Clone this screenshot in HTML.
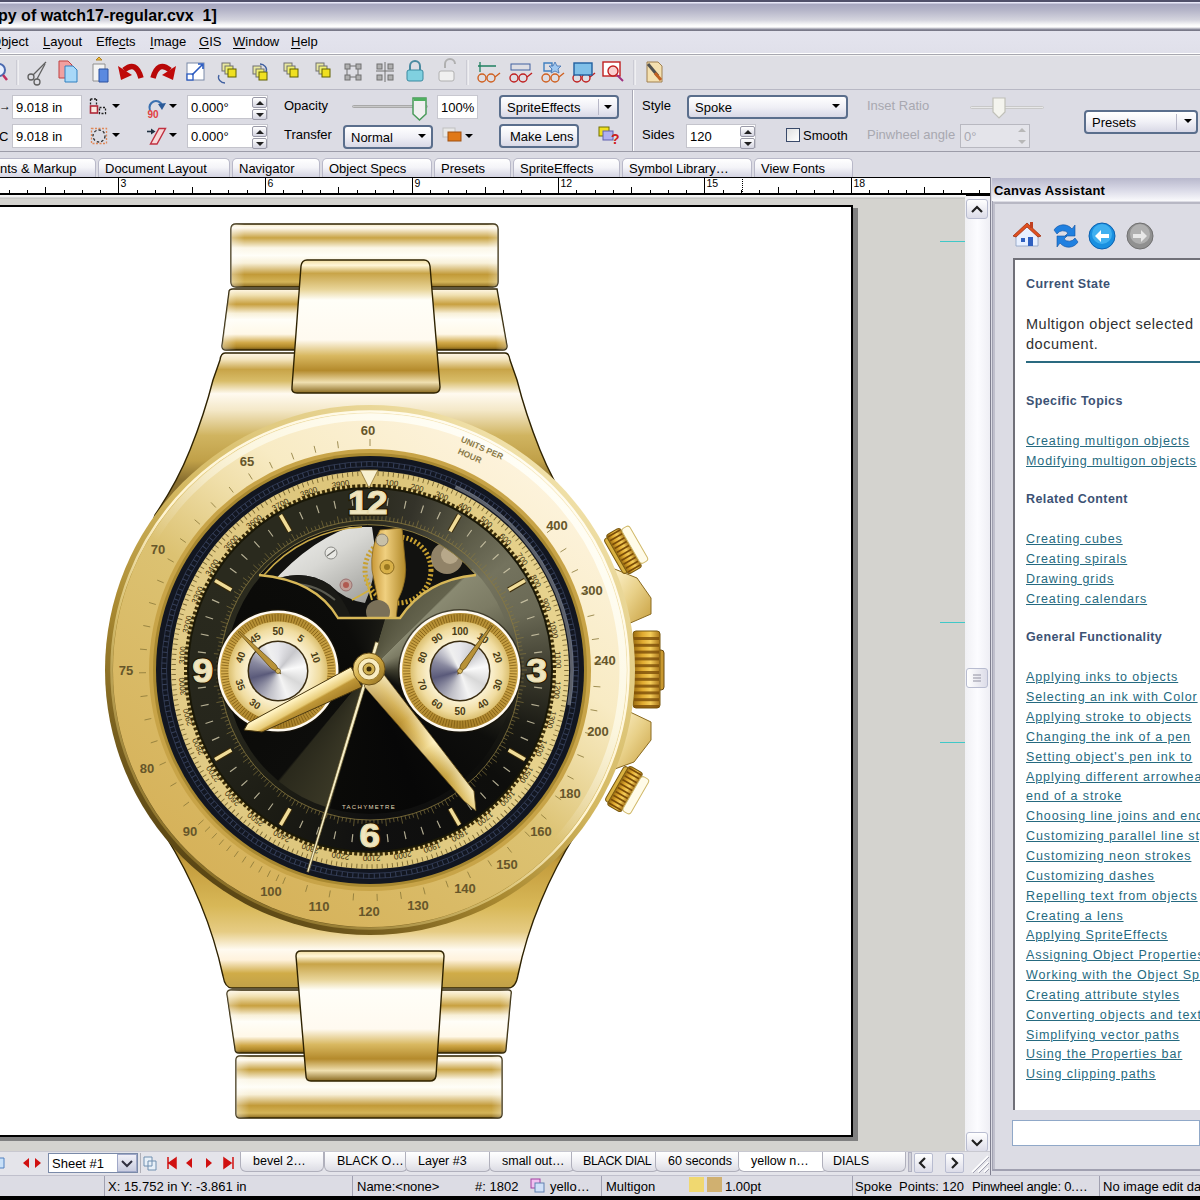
<!DOCTYPE html>
<html><head><meta charset="utf-8">
<style>
*{margin:0;padding:0;box-sizing:border-box}
html,body{width:1200px;height:1200px;overflow:hidden;background:#dcdce4;font-family:"Liberation Sans",sans-serif;font-size:12px;color:#000}
.a{position:absolute}
.t{position:absolute;white-space:nowrap;line-height:1}
#title{left:0;top:0;width:1200px;height:31px;background:linear-gradient(#50506a 0,#50506a 1.5px,#e8e8f8 2.5px,#a8a8c0 4.5px,#b4b4c8 10px,#d4d4de 20px,#fafafa 25px,#ffffff 27px,#8a8a9a 29.5px,#70707e 31px)}
#menu{left:0;top:31px;width:1200px;height:23px;background:linear-gradient(#e4e4ee,#e0e0ea);border-bottom:1px solid #fff}
#tool{left:0;top:54px;width:1200px;height:36px;background:#dedee4;border-top:1px solid #a8a8b0;box-shadow:inset 0 1px #f4f4f4;border-bottom:1px solid #b8b8c4}
#prop{left:0;top:90px;width:1200px;height:62px;background:#dcdce4;border-bottom:1px solid #9c9ca8}
#tabs{left:0;top:152px;width:990px;height:26px;background:#dcdce4}
.tab{position:absolute;top:6px;height:20px;border:1px solid #b8b8c8;border-bottom:none;border-radius:5px 5px 0 0;background:linear-gradient(#ffffff,#f4f4f8 45%,#d0d0e0);font-size:13px;padding:2px 0 0 6px;color:#000}
#ruler{left:0;top:177px;width:990px;height:19px;background:#fff;border-top:1px solid #000;border-bottom:2px solid #000}
#canvas{left:0;top:196px;width:966px;height:955px;background:#d4d3cf}
.u{text-decoration:underline}
.mi{font-size:13px;top:35px}
.mi u{text-decoration:underline;text-underline-offset:1.5px}
.inp{position:absolute;background:#fff;border:1px solid #c4c4cc;font-size:13px;padding:4px 0 0 3px;height:24px}
.dd{position:absolute;border:2px solid #5a6e8c;border-radius:4px;background:linear-gradient(#ffffff,#f0f0f6 50%,#d8d8e6);font-size:13px;padding:3px 0 0 6px;height:24px}
.arr{position:absolute;width:0;height:0;border-left:4px solid transparent;border-right:4px solid transparent;border-top:4px solid #000}
.spin{position:absolute;width:15px;height:24px}
.spin div{position:absolute;left:0;width:15px;height:11px;border:1px solid #9a9aa8;border-radius:2px;background:linear-gradient(#fff,#d4d4e0)}
.lbl{position:absolute;font-size:13px;white-space:nowrap;line-height:1}
.gray{color:#a8a8b0}
.lk{position:absolute;left:1026px;font-family:"Liberation Sans",sans-serif;font-size:12.5px;letter-spacing:0.9px;color:#266a80;text-decoration:underline;white-space:nowrap;line-height:1}
.hd{position:absolute;left:1026px;font-weight:bold;font-size:12.5px;letter-spacing:0.4px;color:#3c5274;white-space:nowrap;line-height:1}
.btab{position:absolute;top:1152px;height:20px;font-size:12.5px;white-space:nowrap;padding:2px 0 0 12px;background:linear-gradient(#ffffff,#f0f0f4 50%,#dcdce4);border:1px solid #b0b0bc;border-top:none;border-radius:0 0 6px 6px;line-height:1.2}
.st{position:absolute;top:1176px;height:20px;font-size:13px;white-space:nowrap;padding:3px 0 0 4px;border-left:1px solid #fff;line-height:1}
</style></head><body>
<div id="title" class="a"></div>
<div class="t" style="left:-2px;top:8px;font-size:16px;font-weight:bold;letter-spacing:0px">py of watch17-regular.cvx&nbsp; 1]</div>
<div id="menu" class="a"></div>
<div class="t mi" style="left:-9px"><u>O</u>bject</div>
<div class="t mi" style="left:43px"><u>L</u>ayout</div>
<div class="t mi" style="left:96px">Effe<u>c</u>ts</div>
<div class="t mi" style="left:150px"><u>I</u>mage</div>
<div class="t mi" style="left:199px"><u>G</u>IS</div>
<div class="t mi" style="left:233px"><u>W</u>indow</div>
<div class="t mi" style="left:291px"><u>H</u>elp</div>
<div id="tool" class="a"></div>
<svg class="a" style="left:0;top:55px" width="700" height="34" viewBox="0 55 700 34">
 <!-- magnifier partial -->
 <circle cx="-1" cy="70" r="6" fill="#e8f0ff" stroke="#4a6ab0" stroke-width="2"/>
 <line x1="3" y1="75" x2="7" y2="80" stroke="#c03060" stroke-width="2.5"/>
 <line x1="17" y1="60" x2="17" y2="85" stroke="#b8b8c4"/>
 <line x1="18" y1="60" x2="18" y2="85" stroke="#fff"/>
 <!-- scissors -->
 <g stroke="#606060" stroke-width="1.3" fill="none"><circle cx="31" cy="77" r="3"/><circle cx="37" cy="82" r="3"/><line x1="33" y1="75" x2="46" y2="62"/><line x1="37" y1="79" x2="45" y2="64"/></g>
 <!-- copy -->
 <path d="M59 61h9l4 4v13h-13z" fill="#f0a0a0" stroke="#c04040"/><path d="M65 66h8l4 4v12h-12z" fill="#a8d8f8" stroke="#3080c0"/>
 <!-- paste -->
 <path d="M93 64h12v17h-12z" fill="#f4f4f4" stroke="#909090"/><path d="M96 60l3-3 3 3z" fill="#f0c040" stroke="#b08020"/><path d="M99 69h9v13h-9z" fill="#5a8ae0" stroke="#2a50a0"/>
 <!-- undo / redo -->
 <path d="M141 78 Q136 60 124 70" stroke="#b80808" stroke-width="5.5" fill="none"/><path d="M118 66 L121 80 L132 75 Z" fill="#c00a0a"/>
 <path d="M153 78 Q158 60 170 70" stroke="#b80808" stroke-width="5.5" fill="none"/><path d="M176 66 L173 80 L162 75 Z" fill="#c00a0a"/>
 <!-- resize -->
 <rect x="187" y="63" width="17" height="17" fill="#fff" stroke="#7a8aa8"/><rect x="187" y="74" width="6" height="6" fill="#fff" stroke="#2a5ac0" stroke-width="1.3"/><path d="M192 75l10-10M198 64h5v5" stroke="#2a5ac0" stroke-width="1.6" fill="none"/>
 <!-- group icons -->
 <g id="grp"><rect x="222" y="63" width="8" height="8" fill="#e8e8a0" stroke="#707070"/><rect x="225" y="66" width="8" height="8" fill="#f0f070" stroke="#707070"/><rect x="228" y="69" width="8" height="8" fill="#f0e020" stroke="#606000"/></g>
 <path d="M219 75c-2 4 2 8 6 8" stroke="#4060a0" fill="none" stroke-width="1.3"/>
 <g transform="translate(31,3)"><use href="#grp"/></g><path d="M260 64c4 0 8 4 6 8" stroke="#4060a0" fill="none" stroke-width="1.3"/>
 <g transform="translate(62,0)"><use href="#grp"/></g>
 <g transform="translate(94,0)"><use href="#grp"/></g>
 <!-- align -->
 <g stroke="#707070" fill="#b0b0b0"><rect x="345" y="64" width="5" height="5"/><rect x="356" y="64" width="5" height="5"/><rect x="345" y="75" width="5" height="5"/><rect x="356" y="75" width="5" height="5"/><path d="M350 66h6M350 77h6M347 69v6M358 69v6" fill="none"/></g>
 <g stroke="#707070" fill="#b0b0b0"><rect x="377" y="64" width="5" height="5"/><rect x="388" y="64" width="5" height="5"/><rect x="377" y="75" width="5" height="5"/><rect x="388" y="75" width="5" height="5"/><path d="M376 71h18M385 62v20" fill="none"/></g>
 <!-- locks -->
 <path d="M410 70v-4a5 5 0 0 1 10 0v4" stroke="#4a8aa0" stroke-width="2" fill="none"/><rect x="407" y="70" width="16" height="11" rx="2" fill="#80d0e0" stroke="#3a8aa0"/>
 <path d="M445 68v-4a5 5 0 0 1 10 0" stroke="#b0b0b0" stroke-width="2" fill="none"/><rect x="439" y="71" width="15" height="10" rx="2" fill="#f0f0f0" stroke="#b0b0b0"/>
 <line x1="467" y1="60" x2="467" y2="85" stroke="#b8b8c4"/><line x1="468" y1="60" x2="468" y2="85" stroke="#fff"/>
 <!-- glasses -->
 <g fill="none" stroke-width="1.4">
  <g stroke="#d06020"><circle cx="482" cy="78" r="4"/><circle cx="491" cy="78" r="4"/><path d="M495 77l5-4"/></g><path d="M480 62v10M478 66h18" stroke="#208060" stroke-width="1.3"/>
  <g stroke="#c02020"><circle cx="514" cy="78" r="4"/><circle cx="523" cy="78" r="4"/><path d="M527 77l5-4"/></g><rect x="511" y="64" width="19" height="6" stroke="#4060a0" stroke-width="1"/>
  <g stroke="#d06020"><circle cx="546" cy="78" r="4"/><circle cx="555" cy="78" r="4"/><path d="M559 77l5-4"/></g><path d="M544 63h8v8h-8z" stroke="#4080c0"/><path d="M555 62l2 4 4 0-3 3 1 4-4-2-4 2 1-4-3-3 4 0z" fill="#a0c8f0" stroke="#4070b0" stroke-width=".8"/>
  <g stroke="#c02020"><circle cx="577" cy="78" r="4"/><circle cx="586" cy="78" r="4"/><path d="M590 77l5-4"/></g><rect x="574" y="63" width="18" height="12" fill="#80c0e8" stroke="#2060a0"/>
  <rect x="603" y="62" width="17" height="14" stroke="#c02020" fill="#fff"/><circle cx="613" cy="71" r="5" stroke="#c02020" fill="#f8d0d0"/><path d="M617 75l6 6" stroke="#a03080" stroke-width="2"/>
 </g>
 <line x1="634" y1="60" x2="634" y2="85" stroke="#b8b8c4"/><line x1="635" y1="60" x2="635" y2="85" stroke="#fff"/>
 <path d="M647 62h11l4 4v16h-15z" fill="#f4e0b0" stroke="#a08050"/><path d="M648 64l10 12" stroke="#505050" stroke-width="3"/><path d="M655 73l6 7" stroke="#c06020" stroke-width="3"/>
</svg>
<div id="prop" class="a"></div>
<!-- row1 -->
<div class="t" style="left:-1px;top:100px;font-size:12px">&#8594;</div>
<div class="t" style="left:-1px;top:130px;font-size:13px">C</div>
<div class="inp" style="left:12px;top:95px;width:70px">9.018 in</div>
<div class="inp" style="left:12px;top:124px;width:70px">9.018 in</div>
<svg class="a" style="left:85px;top:95px" width="100" height="55">
 <path d="M5.5 4V11M11.5 4V11M5.5 4H11.5" stroke="#202020" stroke-width="1.3" stroke-dasharray="2 1.5" fill="none"/>
 <rect x="5.5" y="11" width="7" height="7" fill="#f8e8e0" stroke="#b02838" stroke-width="1.6"/>
 <rect x="14.5" y="12.5" width="6" height="6" fill="none" stroke="#202020" stroke-width="1.3" stroke-dasharray="2 1.5"/>
 <rect x="6.5" y="33.5" width="15" height="15" fill="none" stroke="#e08858" stroke-width="1.3" stroke-dasharray="2 1.5"/>
 <circle cx="14" cy="41" r="6" fill="none" stroke="#303030" stroke-width="1.3" stroke-dasharray="2.5 2"/>
 <path d="M65 15A6.5 6.5 0 1 1 77 10" stroke="#3a70b0" stroke-width="2.2" fill="none"/><path d="M73 9L81 8L77 15Z" fill="#2a5a98"/>
 <text x="62.5" y="22.5" font-size="10" font-weight="bold" fill="#e04040" font-family="Liberation Sans">90</text>
 <path d="M62 36.5H67" stroke="#203040" stroke-width="1.6"/><path d="M66 33.5L70.5 36.5L66 39.5Z" fill="#203040"/>
 <path d="M74 33.5L80.5 33.5L72 49L65.5 49Z" fill="#f8d8d8" stroke="#c03040" stroke-width="1.4"/>
</svg>
<div class="arr" style="left:112px;top:104px"></div><div class="arr" style="left:112px;top:133px"></div>
<div class="arr" style="left:169px;top:104px"></div><div class="arr" style="left:169px;top:133px"></div>
<div class="inp" style="left:187px;top:95px;width:81px">0.000°</div>
<div class="inp" style="left:187px;top:124px;width:81px">0.000°</div>
<div class="spin" style="left:252px;top:97px"><div style="top:0"></div><div style="top:12px"></div></div>
<div class="spin" style="left:252px;top:126px"><div style="top:0"></div><div style="top:12px"></div></div>
<svg class="a" style="left:252px;top:97px" width="16" height="55" fill="#202020"><path d="M4 8l4-4 4 4z M4 16l4 4 4-4z M4 37l4-4 4 4z M4 45l4 4 4-4z"/></svg>
<div class="lbl" style="left:284px;top:99px">Opacity</div>
<div class="lbl" style="left:284px;top:128px">Transfer</div>
<div class="a" style="left:352px;top:105px;width:76px;height:3px;background:#c8c8c8;border:1px solid #a8a8a8;border-radius:2px"></div>
<svg class="a" style="left:411px;top:95px" width="18" height="26"><path d="M2 3h13v16l-6.5 6-6.5-6z" fill="#f0f0f0" stroke="#4a9a5a" stroke-width="1.5"/><rect x="3" y="3" width="12" height="3" fill="#50b060"/></svg>
<div class="inp" style="left:437px;top:95px;width:41px;border-color:#c8c8d0">100%</div>
<div class="dd" style="left:499px;top:95px;width:120px">SpriteEffects</div><div class="a" style="left:598px;top:99px;width:1px;height:16px;background:#b8b8c8"></div><div class="arr" style="left:604px;top:105px"></div>
<div class="dd" style="left:343px;top:125px;width:90px">Normal</div><div class="arr" style="left:418px;top:134px"></div>
<svg class="a" style="left:441px;top:125px" width="40" height="20"><rect x="2" y="3" width="12" height="9" fill="#e8e8e8" stroke="#c0c0c0"/><rect x="7" y="7" width="13" height="9" fill="#e07818" stroke="#a05010"/></svg>
<div class="arr" style="left:465px;top:134px"></div>
<div class="dd" style="left:499px;top:124px;width:80px;padding-left:9px">Make Lens</div>
<svg class="a" style="left:597px;top:124px" width="26" height="24"><rect x="2" y="3" width="10" height="9" fill="#f0e020" stroke="#707000"/><rect x="6" y="7" width="10" height="9" fill="#b0b0f0" stroke="#6060b0"/><text x="14" y="20" font-size="14" font-weight="bold" fill="#d02020" font-family="Liberation Sans">?</text></svg>
<div class="a" style="left:632px;top:90px;width:1px;height:61px;background:#a8a8b4"></div><div class="a" style="left:633px;top:90px;width:1px;height:61px;background:#fff"></div>
<div class="lbl" style="left:642px;top:99px">Style</div>
<div class="lbl" style="left:642px;top:128px">Sides</div>
<div class="dd" style="left:687px;top:95px;width:161px">Spoke</div><div class="arr" style="left:832px;top:104px"></div>
<div class="inp" style="left:686px;top:124px;width:70px">120</div>
<div class="spin" style="left:740px;top:126px"><div style="top:0"></div><div style="top:12px"></div></div>
<svg class="a" style="left:740px;top:126px" width="16" height="26" fill="#202020"><path d="M4 8l4-4 4 4z M4 16l4 4 4-4z"/></svg>
<div class="a" style="left:786px;top:128px;width:14px;height:14px;border:1px solid #3a4a6a;background:linear-gradient(135deg,#e0e0e0,#fff)"></div>
<div class="lbl" style="left:803px;top:129px">Smooth</div>
<div class="lbl gray" style="left:867px;top:99px">Inset Ratio</div>
<div class="lbl gray" style="left:867px;top:128px">Pinwheel angle</div>
<div class="a" style="left:970px;top:106px;width:74px;height:3px;background:#e8e8e8;border:1px solid #c8c8c8;border-radius:2px"></div>
<svg class="a" style="left:990px;top:95px" width="18" height="26"><path d="M3 3h12v14l-6 6-6-6z" fill="#f4f4ee" stroke="#c0c0b8" stroke-width="1.2"/></svg>
<div class="inp gray" style="left:960px;top:124px;width:70px;border-color:#b8b8c0;background:#e4e4ea">0°</div>
<svg class="a" style="left:1014px;top:124px" width="16" height="26" fill="#b8b8b8"><path d="M4 8l4-4 4 4z M4 16l4 4 4-4z"/></svg>
<div class="dd" style="left:1084px;top:110px;width:114px">Presets</div><div class="a" style="left:1176px;top:114px;width:1px;height:16px;background:#b8b8c8"></div><div class="arr" style="left:1184px;top:119px"></div>
<div id="tabs" class="a"></div>
<div class="tab" style="left:-20px;width:116px;top:158px;padding-left:19px">nts &amp; Markup</div>
<div class="tab" style="left:98px;width:132px;top:158px">Document Layout</div>
<div class="tab" style="left:232px;width:88px;top:158px">Navigator</div>
<div class="tab" style="left:322px;width:110px;top:158px">Object Specs</div>
<div class="tab" style="left:434px;width:77px;top:158px">Presets</div>
<div class="tab" style="left:513px;width:107px;top:158px">SpriteEffects</div>
<div class="tab" style="left:622px;width:130px;top:158px">Symbol Library…</div>
<div class="tab" style="left:754px;width:99px;top:158px">View Fonts</div>
<div id="ruler" class="a"></div>
<svg class="a" style="left:0;top:178px" width="990" height="16"><path d="M9.5 12V16M27.5 12V16M45.5 9V16M64.5 12V16M82.5 12V16M100.5 12V16M118.5 0V16M137.5 12V16M155.5 12V16M173.5 12V16M192.5 9V16M210.5 12V16M228.5 12V16M247.5 12V16M265.5 0V16M283.5 12V16M302.5 12V16M320.5 12V16M338.5 9V16M357.5 12V16M375.5 12V16M393.5 12V16M412.5 0V16M430.5 12V16M448.5 12V16M466.5 12V16M485.5 9V16M503.5 12V16M521.5 12V16M540.5 12V16M558.5 0V16M576.5 12V16M595.5 12V16M613.5 12V16M631.5 9V16M650.5 12V16M668.5 12V16M686.5 12V16M704.5 0V16M723.5 12V16M741.5 12V16M759.5 12V16M778.5 9V16M796.5 12V16M814.5 12V16M833.5 12V16M851.5 0V16M869.5 12V16M888.5 12V16M906.5 12V16M924.5 9V16M943.5 12V16M961.5 12V16M979.5 12V16" stroke="#000" stroke-width="1"/><text x="120.5" y="9" font-family="Liberation Sans" font-size="10.5" fill="#000">3</text><text x="267.5" y="9" font-family="Liberation Sans" font-size="10.5" fill="#000">6</text><text x="414.5" y="9" font-family="Liberation Sans" font-size="10.5" fill="#000">9</text><text x="560.5" y="9" font-family="Liberation Sans" font-size="10.5" fill="#000">12</text><text x="706.5" y="9" font-family="Liberation Sans" font-size="10.5" fill="#000">15</text><text x="853.5" y="9" font-family="Liberation Sans" font-size="10.5" fill="#000">18</text><path d="M0 15.5H990" stroke="#000"/><path d="M742.5 1V15" stroke="#000" stroke-dasharray="1 1"/></svg>
<div id="canvas" class="a"></div>
<div class="a" style="left:0;top:195px;width:966px;height:4px;background:linear-gradient(#f6f6f6 0,#f0f0f0 2px,#b8b8b8 3px,#d4d3cf 4px)"></div>
<div class="a" style="left:853px;top:208px;width:5px;height:933px;background:#808080"></div>
<div class="a" style="left:0;top:1136px;width:858px;height:5px;background:#808080"></div>
<div class="a" style="left:0;top:205px;width:853px;height:932px;background:#fff;border:2px solid #000;border-left:none"></div>
<div class="a" style="left:940px;top:241px;width:25px;height:1px;background:#40c8c8"></div>
<div class="a" style="left:940px;top:622px;width:25px;height:1px;background:#40c8c8"></div>
<div class="a" style="left:940px;top:742px;width:25px;height:1px;background:#40c8c8"></div>
<!-- vertical scrollbar -->
<div class="a" style="left:965px;top:196px;width:25px;height:955px;background:linear-gradient(90deg,#f0f0f4,#fcfcff 50%,#eeeef4)"></div>
<div class="a" style="left:966px;top:199px;width:22px;height:20px;border:1px solid #b8bcd0;border-radius:3px;background:linear-gradient(#fff,#dcdce8)"></div>
<svg class="a" style="left:966px;top:199px" width="22" height="20"><path d="M6 13l5-5 5 5" stroke="#202020" stroke-width="2.2" fill="none"/></svg>
<div class="a" style="left:966px;top:1132px;width:22px;height:20px;border:1px solid #b8bcd0;border-radius:3px;background:linear-gradient(#fff,#dcdce8)"></div>
<svg class="a" style="left:966px;top:1132px" width="22" height="20"><path d="M6 8l5 5 5-5" stroke="#202020" stroke-width="2.2" fill="none"/></svg>
<div class="a" style="left:966px;top:668px;width:22px;height:20px;border:1px solid #b8bcd0;border-radius:3px;background:linear-gradient(90deg,#fff,#dcdce8)"></div>
<svg class="a" style="left:966px;top:668px" width="22" height="20"><path d="M7 7h8M7 10h8M7 13h8" stroke="#9090a0" stroke-width="1"/></svg>
<div class="a" style="left:0;top:0;width:1200px;height:1200px;overflow:hidden;clip-path:inset(207px 348px 64px 0)"><svg width="1200" height="1200" viewBox="0 0 1200 1200" style="position:absolute;left:0;top:0">
<defs>
<linearGradient id="gLink" x1="0" y1="0" x2="0" y2="1">
 <stop offset="0" stop-color="#f8ecc8"/><stop offset=".06" stop-color="#fffaf0"/><stop offset=".22" stop-color="#c9a445"/>
 <stop offset=".38" stop-color="#fbf6e6"/><stop offset=".5" stop-color="#fffef8"/><stop offset=".62" stop-color="#f8f0d8"/>
 <stop offset=".8" stop-color="#c29a38"/><stop offset=".92" stop-color="#d4b458"/><stop offset="1" stop-color="#8a6a20"/>
</linearGradient>
<linearGradient id="gCLink" x1="0" y1="0" x2="0" y2="1">
 <stop offset="0" stop-color="#f0dca0"/><stop offset=".04" stop-color="#fff6d8"/><stop offset=".1" stop-color="#c8a448"/>
 <stop offset=".22" stop-color="#e8d498"/><stop offset=".3" stop-color="#fffef8"/><stop offset=".6" stop-color="#fffaf0"/>
 <stop offset=".72" stop-color="#d8b860"/><stop offset=".83" stop-color="#b48a2c"/><stop offset=".92" stop-color="#f0e0b0"/><stop offset="1" stop-color="#8a6a20"/>
</linearGradient>
<linearGradient id="gLugT" x1="0" y1="353" x2="0" y2="480" gradientUnits="userSpaceOnUse">
 <stop offset="0" stop-color="#fff8e8"/><stop offset=".05" stop-color="#f4e6c0"/><stop offset=".13" stop-color="#c8a448"/><stop offset=".22" stop-color="#d8bc68"/>
 <stop offset=".32" stop-color="#fffaf0"/><stop offset=".45" stop-color="#f4e8c8"/><stop offset=".65" stop-color="#d0b460"/><stop offset=".85" stop-color="#c0a048"/><stop offset="1" stop-color="#8a7030"/>
</linearGradient>
<linearGradient id="gLink2" x1="0" y1="0" x2="0" y2="1">
 <stop offset="0" stop-color="#fff8e8"/><stop offset=".1" stop-color="#f0e0b0"/><stop offset=".25" stop-color="#c8a040"/><stop offset=".4" stop-color="#f8f0d8"/>
 <stop offset=".5" stop-color="#fffef8"/><stop offset=".74" stop-color="#fff8e8"/><stop offset=".88" stop-color="#d0a848"/><stop offset=".95" stop-color="#b08828"/><stop offset="1" stop-color="#6a5018"/>
</linearGradient>
<linearGradient id="gEnds" x1="0" y1="0" x2="1" y2="0">
 <stop offset="0" stop-color="#fff" stop-opacity=".4"/><stop offset=".05" stop-color="#fff" stop-opacity="0"/><stop offset=".96" stop-color="#fff" stop-opacity="0"/><stop offset="1" stop-color="#fff" stop-opacity=".3"/>
</linearGradient>
<linearGradient id="gLugB" x1="0" y1="840" x2="0" y2="988" gradientUnits="userSpaceOnUse">
 <stop offset="0" stop-color="#7a6020"/><stop offset=".15" stop-color="#c49c3c"/><stop offset=".45" stop-color="#d8b858"/>
 <stop offset=".62" stop-color="#e6cc84"/><stop offset=".74" stop-color="#fffaf0"/><stop offset=".81" stop-color="#fff2dc"/><stop offset=".9" stop-color="#d0ac48"/><stop offset="1" stop-color="#c0a048"/>
</linearGradient>
<linearGradient id="gRim" x1="0.2" y1="0.9" x2="0.8" y2="0.1">
 <stop offset="0" stop-color="#5a4614"/><stop offset=".3" stop-color="#a88830"/><stop offset=".55" stop-color="#d4b860"/><stop offset="1" stop-color="#f0e0a8"/>
</linearGradient>
<linearGradient id="gBezel" x1="0.2" y1="0.9" x2="0.8" y2="0.1">
 <stop offset="0" stop-color="#d6b25a"/><stop offset=".45" stop-color="#dcc272"/><stop offset=".62" stop-color="#f0dfaa"/>
 <stop offset=".72" stop-color="#f8ebc4"/><stop offset="1" stop-color="#fdf3dc"/>
</linearGradient>
<linearGradient id="gTach" x1="0" y1="0" x2="1" y2="0">
 <stop offset="0" stop-color="#e2cc88"/><stop offset=".5" stop-color="#dcc478"/><stop offset="1" stop-color="#e8d490"/>
</linearGradient>
<linearGradient id="gSub" x1="0" y1="0" x2="0" y2="1">
 <stop offset="0" stop-color="#c8a448"/><stop offset=".3" stop-color="#f0e0a8"/><stop offset=".55" stop-color="#f8ecc0"/><stop offset=".8" stop-color="#d8b860"/><stop offset="1" stop-color="#b89438"/>
</linearGradient>
<radialGradient id="gSubR" cx=".5" cy=".5" r=".5">
 <stop offset=".55" stop-color="#fff8e0" stop-opacity=".5"/><stop offset=".8" stop-color="#e8cc78" stop-opacity="0"/><stop offset="1" stop-color="#a08030" stop-opacity=".5"/>
</radialGradient>
<linearGradient id="gSilver" x1="0.15" y1="0.85" x2="0.85" y2="0.15">
 <stop offset="0" stop-color="#6e7090"/><stop offset=".35" stop-color="#b8b8c4"/><stop offset=".5" stop-color="#f4f4f4"/><stop offset=".7" stop-color="#c8c8c8"/><stop offset="1" stop-color="#f8f8f8"/>
</linearGradient>
<linearGradient id="gHand" x1="0" y1="0" x2="0" y2="1">
 <stop offset="0" stop-color="#fff4c8"/><stop offset=".45" stop-color="#e8cc70"/><stop offset=".5" stop-color="#b89030"/><stop offset="1" stop-color="#d8b858"/>
</linearGradient>
<linearGradient id="gCrown" x1="0" y1="0" x2="1" y2="0">
 <stop offset="0" stop-color="#9a6c10"/><stop offset=".35" stop-color="#e0aa30"/><stop offset=".65" stop-color="#f4cc58"/><stop offset="1" stop-color="#a87418"/>
</linearGradient>
<linearGradient id="gGuard" x1="0" y1="0" x2="1" y2="1">
 <stop offset="0" stop-color="#fff4d0"/><stop offset=".5" stop-color="#e8d088"/><stop offset="1" stop-color="#c8a040"/>
</linearGradient>
<linearGradient id="gPiv" x1="0" y1="0" x2="1" y2="1">
 <stop offset="0" stop-color="#fff0b0"/><stop offset=".5" stop-color="#d0a840"/><stop offset="1" stop-color="#8a6a20"/>
</linearGradient>
<clipPath id="cWin"><path d="M259 575 A142 142 0 0 1 476 575 Q425 580 400 618 L338 618 Q316 580 259 575 Z"/></clipPath>
</defs>
<path d="M612 568 L637 578 L651 598 L651 614 L628 624 L612 618 Z" fill="url(#gGuard)" stroke="#8a6a20" stroke-width="1"/>
<path d="M612 716 L630 712 L651 722 L651 740 L634 762 L612 770 Z" fill="url(#gGuard)" stroke="#8a6a20" stroke-width="1"/>
<rect x="-12" y="-20" width="8" height="40" rx="3" fill="#d8b040" stroke="#7a5a10" transform="translate(624 551) rotate(-30)"/>
<g transform="translate(624 551) rotate(-30)"><rect x="-8" y="-22.5" width="16" height="45" rx="3" fill="url(#gCrown)" stroke="#7a5a10" stroke-width="1"/><line x1="-7" y1="-20.2" x2="7" y2="-20.2" stroke="#7a4c08" stroke-width="1.7"/><line x1="-7" y1="-15.8" x2="7" y2="-15.8" stroke="#7a4c08" stroke-width="1.7"/><line x1="-7" y1="-11.2" x2="7" y2="-11.2" stroke="#7a4c08" stroke-width="1.7"/><line x1="-7" y1="-6.8" x2="7" y2="-6.8" stroke="#7a4c08" stroke-width="1.7"/><line x1="-7" y1="-2.2" x2="7" y2="-2.2" stroke="#7a4c08" stroke-width="1.7"/><line x1="-7" y1="2.2" x2="7" y2="2.2" stroke="#7a4c08" stroke-width="1.7"/><line x1="-7" y1="6.8" x2="7" y2="6.8" stroke="#7a4c08" stroke-width="1.7"/><line x1="-7" y1="11.2" x2="7" y2="11.2" stroke="#7a4c08" stroke-width="1.7"/><line x1="-7" y1="15.8" x2="7" y2="15.8" stroke="#7a4c08" stroke-width="1.7"/><line x1="-7" y1="20.2" x2="7" y2="20.2" stroke="#7a4c08" stroke-width="1.7"/></g>
<rect x="8" y="-20" width="9" height="40" rx="3" fill="#fffbe8" stroke="#d0b868" transform="translate(624 551) rotate(-30)"/>
<rect x="-12" y="-20" width="8" height="40" rx="3" fill="#d8b040" stroke="#7a5a10" transform="translate(625 789) rotate(30)"/>
<g transform="translate(625 789) rotate(30)"><rect x="-8" y="-22.5" width="16" height="45" rx="3" fill="url(#gCrown)" stroke="#7a5a10" stroke-width="1"/><line x1="-7" y1="-20.2" x2="7" y2="-20.2" stroke="#7a4c08" stroke-width="1.7"/><line x1="-7" y1="-15.8" x2="7" y2="-15.8" stroke="#7a4c08" stroke-width="1.7"/><line x1="-7" y1="-11.2" x2="7" y2="-11.2" stroke="#7a4c08" stroke-width="1.7"/><line x1="-7" y1="-6.8" x2="7" y2="-6.8" stroke="#7a4c08" stroke-width="1.7"/><line x1="-7" y1="-2.2" x2="7" y2="-2.2" stroke="#7a4c08" stroke-width="1.7"/><line x1="-7" y1="2.2" x2="7" y2="2.2" stroke="#7a4c08" stroke-width="1.7"/><line x1="-7" y1="6.8" x2="7" y2="6.8" stroke="#7a4c08" stroke-width="1.7"/><line x1="-7" y1="11.2" x2="7" y2="11.2" stroke="#7a4c08" stroke-width="1.7"/><line x1="-7" y1="15.8" x2="7" y2="15.8" stroke="#7a4c08" stroke-width="1.7"/><line x1="-7" y1="20.2" x2="7" y2="20.2" stroke="#7a4c08" stroke-width="1.7"/></g>
<rect x="8" y="-20" width="9" height="40" rx="3" fill="#fffbe8" stroke="#d0b868" transform="translate(625 789) rotate(30)"/>
<rect x="652" y="650" width="12" height="40" rx="3" fill="#c89830" stroke="#6a4a10"/>
<rect x="633" y="631" width="27" height="77" rx="3" fill="url(#gCrown)" stroke="#7a5a10"/>
<rect x="634" y="637" width="25" height="3" fill="#7a4c08" opacity=".8"/>
<rect x="634" y="643.8" width="25" height="3" fill="#7a4c08" opacity=".8"/>
<rect x="634" y="650.6" width="25" height="3" fill="#7a4c08" opacity=".8"/>
<rect x="634" y="657.4" width="25" height="3" fill="#7a4c08" opacity=".8"/>
<rect x="634" y="664.2" width="25" height="3" fill="#7a4c08" opacity=".8"/>
<rect x="634" y="671" width="25" height="3" fill="#7a4c08" opacity=".8"/>
<rect x="634" y="677.8" width="25" height="3" fill="#7a4c08" opacity=".8"/>
<rect x="634" y="684.6" width="25" height="3" fill="#7a4c08" opacity=".8"/>
<rect x="634" y="691.4" width="25" height="3" fill="#7a4c08" opacity=".8"/>
<rect x="634" y="698.2" width="25" height="3" fill="#7a4c08" opacity=".8"/>
<rect x="634" y="705" width="25" height="3" fill="#7a4c08" opacity=".8"/>
<path d="M236 224 H493 Q498 224 498 229 V282 Q498 287 493 287 H236 Q231 287 231 282 V229 Q231 224 236 224Z" fill="url(#gLink)" stroke="#2e2200" stroke-width="1.4"/>
<path d="M236 224 H493 Q498 224 498 229 V282 Q498 287 493 287 H236 Q231 287 231 282 V229 Q231 224 236 224Z" fill="url(#gEnds)"/>
<path d="M233 289 H497 L507 346 Q507 350 503 350 H226 Q222 350 222 346 L229 292 Q229 289 233 289Z" fill="url(#gLink2)" stroke="#2e2200" stroke-width="1.4"/>
<path d="M233 289 H497 L507 346 Q507 350 503 350 H226 Q222 350 222 346 L229 292 Q229 289 233 289Z" fill="url(#gEnds)"/>
<path d="M225 353 H505 Q509 353 510 360 L517 380 C522 400 530 425 540 450 C548 470 558 490 575 515 L600 560 L140 560 L155 515 C172 490 182 470 190 450 C200 425 208 400 213 380 L220 360 Q221 353 225 353Z" fill="url(#gLugT)" stroke="#2e2200" stroke-width="1.4"/>
<path d="M307 260 H424 Q429 260 430 266 L440 387 Q440 393 434 393 H297 Q291 393 292 387 L301 266 Q302 260 307 260Z" fill="url(#gCLink)" stroke="#2e2200" stroke-width="1.4"/>
<path d="M240 1056 H498 Q502 1056 502 1060 V1114 Q502 1118 498 1118 H240 Q236 1118 236 1114 V1060 Q236 1056 240 1056Z" fill="url(#gLink)" stroke="#2e2200" stroke-width="1.4"/>
<path d="M240 1056 H498 Q502 1056 502 1060 V1114 Q502 1118 498 1118 H240 Q236 1118 236 1114 V1060 Q236 1056 240 1056Z" fill="url(#gEnds)"/>
<path d="M231 990 H508 Q512 990 511 994 L506 1049 Q506 1053 502 1053 H239 Q235 1053 235 1049 L227 994 Q227 990 231 990Z" fill="url(#gLink2)" stroke="#2e2200" stroke-width="1.4"/>
<path d="M231 990 H508 Q512 990 511 994 L506 1049 Q506 1053 502 1053 H239 Q235 1053 235 1049 L227 994 Q227 990 231 990Z" fill="url(#gEnds)"/>
<path d="M160 780 L580 780 L575 835 C550 875 528 925 518 975 Q516 988 508 988 H232 Q225 988 223 976 C212 925 190 875 165 835 Z" fill="url(#gLugB)" stroke="#2e2200" stroke-width="1.4"/>
<path d="M301 951 H439 Q444 951 444 956 L436 1076 Q435 1081 430 1081 H311 Q306 1081 306 1076 L296 956 Q296 951 301 951Z" fill="url(#gCLink)" stroke="#2e2200" stroke-width="1.4"/>
<circle cx="370" cy="670" r="265" fill="url(#gRim)"/>
<linearGradient id="gHi" x1="0.2" y1="0.9" x2="0.8" y2="0.1"><stop offset="0" stop-color="#8a7028"/><stop offset=".3" stop-color="#d8c070"/><stop offset=".5" stop-color="#fff4d0"/><stop offset="1" stop-color="#fffcf0"/></linearGradient>
<circle cx="370" cy="670" r="258.5" fill="none" stroke="url(#gHi)" stroke-width="2.5"/>
<circle cx="370" cy="670" r="257" fill="url(#gBezel)"/>
<linearGradient id="gHi2" x1="0.2" y1="0.9" x2="0.8" y2="0.1"><stop offset=".45" stop-color="#fff" stop-opacity="0"/><stop offset=".7" stop-color="#fffff4" stop-opacity=".6"/><stop offset="1" stop-color="#fffff8" stop-opacity=".9"/></linearGradient>
<circle cx="370" cy="670" r="253" fill="none" stroke="url(#gHi2)" stroke-width="7"/>
<path d="M370 446L370 439M547 532.7L552.5 528.4M560.4 552L566.3 548.3M571.7 572.5L578 569.5M580.8 594.1L587.3 591.8M587.5 616.6L594.3 614.9M591.9 639.6L598.9 638.6M593.9 663L600.9 662.7M593.4 686.4L600.4 686.9M590.5 709.7L597.3 710.9M585.1 732.5L591.8 734.4M577.4 754.6L583.9 757.3M567.4 775.9L573.6 779.2M555.3 795.9L561.1 799.8M541.1 814.6L546.4 819.1M525 831.7L529.9 836.7M507.3 847L511.6 852.5M488 860.4L491.7 866.3M467.5 871.7L470.5 878M445.9 880.8L448.2 887.3M423.4 887.5L425.1 894.3M400.4 891.9L401.4 898.9M377 893.9L377.3 900.9M353.6 893.4L353.1 900.4M330.3 890.5L329.1 897.3M307.5 885.1L305.6 891.8M285.4 877.4L282.7 883.9M278.9 874.6L276 881M270.4 870.6L267.3 876.9M262.1 866.3L258.7 872.4M254 861.6L250.3 867.6M246 856.6L242.2 862.4M238.3 851.2L234.2 856.9M230.9 845.5L226.5 851M223.6 839.6L219.1 844.9M216.7 833.3L211.9 838.4M210 826.7L205 831.6M203.5 819.9L198.3 824.6M189 802L183.4 806.1M176.4 782.7L170.4 786.2M165.8 762.2L159.5 765.1M157.5 740.7L150.8 742.9M151.3 718.5L144.5 720M147.5 695.7L140.5 696.6M146 672.7L139 672.8M146.9 649.7L140 649.1M150.2 626.9L143.3 625.5M155.8 604.5L149.1 602.5M163.7 582.8L157.2 580.1M173.7 562.1L167.6 558.7M185.8 542.5L180.1 538.5M199.9 524.2L194.6 519.7M215.8 507.5L211 502.4M233.3 492.5L229.1 487M252.3 479.4L248.6 473.5M272.5 468.3L269.5 462M293.8 459.4L291.4 452.8M315.8 452.7L314.1 445.9M338.4 448.2L337.5 441.3" stroke="#8a7838" stroke-width="1" opacity=".8"/>
<text x="368" y="430" font-family="Liberation Sans" font-weight="bold" font-size="13" fill="#66562a" text-anchor="middle" dominant-baseline="central">60</text>
<text x="247" y="461" font-family="Liberation Sans" font-weight="bold" font-size="13" fill="#66562a" text-anchor="middle" dominant-baseline="central">65</text>
<text x="158" y="549" font-family="Liberation Sans" font-weight="bold" font-size="13" fill="#66562a" text-anchor="middle" dominant-baseline="central">70</text>
<text x="126" y="670" font-family="Liberation Sans" font-weight="bold" font-size="13" fill="#66562a" text-anchor="middle" dominant-baseline="central">75</text>
<text x="147" y="768" font-family="Liberation Sans" font-weight="bold" font-size="13" fill="#66562a" text-anchor="middle" dominant-baseline="central">80</text>
<text x="190" y="831" font-family="Liberation Sans" font-weight="bold" font-size="13" fill="#66562a" text-anchor="middle" dominant-baseline="central">90</text>
<text x="271" y="891" font-family="Liberation Sans" font-weight="bold" font-size="13" fill="#66562a" text-anchor="middle" dominant-baseline="central">100</text>
<text x="319" y="906" font-family="Liberation Sans" font-weight="bold" font-size="13" fill="#66562a" text-anchor="middle" dominant-baseline="central">110</text>
<text x="369" y="911" font-family="Liberation Sans" font-weight="bold" font-size="13" fill="#66562a" text-anchor="middle" dominant-baseline="central">120</text>
<text x="418" y="905" font-family="Liberation Sans" font-weight="bold" font-size="13" fill="#66562a" text-anchor="middle" dominant-baseline="central">130</text>
<text x="465" y="888" font-family="Liberation Sans" font-weight="bold" font-size="13" fill="#66562a" text-anchor="middle" dominant-baseline="central">140</text>
<text x="507" y="864" font-family="Liberation Sans" font-weight="bold" font-size="13" fill="#66562a" text-anchor="middle" dominant-baseline="central">150</text>
<text x="541" y="831" font-family="Liberation Sans" font-weight="bold" font-size="13" fill="#66562a" text-anchor="middle" dominant-baseline="central">160</text>
<text x="570" y="793" font-family="Liberation Sans" font-weight="bold" font-size="13" fill="#66562a" text-anchor="middle" dominant-baseline="central">180</text>
<text x="598" y="731" font-family="Liberation Sans" font-weight="bold" font-size="13" fill="#66562a" text-anchor="middle" dominant-baseline="central">200</text>
<text x="605" y="660" font-family="Liberation Sans" font-weight="bold" font-size="13" fill="#66562a" text-anchor="middle" dominant-baseline="central">240</text>
<text x="592" y="590" font-family="Liberation Sans" font-weight="bold" font-size="13" fill="#66562a" text-anchor="middle" dominant-baseline="central">300</text>
<text x="557" y="525" font-family="Liberation Sans" font-weight="bold" font-size="13" fill="#66562a" text-anchor="middle" dominant-baseline="central">400</text>
<text x="478" y="450" font-family="Liberation Sans" font-weight="bold" font-size="8.5" fill="#8a7a48" text-anchor="middle" transform="rotate(24 478 457)">UNITS PER</text>
<text x="470" y="462" font-family="Liberation Sans" font-weight="bold" font-size="8.5" fill="#8a7a48" text-anchor="middle" transform="rotate(24 478 457)">HOUR</text>
<circle cx="370" cy="670" r="221" fill="#c8a448"/>
<circle cx="370" cy="670" r="217" fill="#a88830"/>
<circle cx="370" cy="670" r="214" fill="#121620"/>
<circle cx="370" cy="670" r="206" fill="none" stroke="#36405a" stroke-width="5" stroke-dasharray="1 4.4"/>
<circle cx="370" cy="670" r="208.5" fill="none" stroke="#36405a" stroke-width=".8"/>
<circle cx="370" cy="670" r="203.5" fill="none" stroke="#36405a" stroke-width=".8"/>
<path d="M455.4 486.9 A202 202 0 0 1 568.9 705.1" stroke="#9aa0a8" stroke-width="3.5" fill="none" opacity=".55"/>
<circle cx="370" cy="670" r="199" fill="url(#gTach)"/>
<circle cx="370" cy="670" r="196.5" fill="none" stroke="#5a4818" stroke-width="4.5" stroke-dasharray="0.9 4.2" opacity=".75"/>
<text x="391.6" y="483.2" font-family="Liberation Sans" font-size="8" fill="#3a2e0c" text-anchor="middle" dominant-baseline="central" transform="rotate(6.6 391.6 483.2)">100</text>
<text x="417" y="488" font-family="Liberation Sans" font-size="8" fill="#3a2e0c" text-anchor="middle" dominant-baseline="central" transform="rotate(14.5 417 488)">200</text>
<text x="441.6" y="496.2" font-family="Liberation Sans" font-size="8" fill="#3a2e0c" text-anchor="middle" dominant-baseline="central" transform="rotate(22.4 441.6 496.2)">300</text>
<text x="464.8" y="507.6" font-family="Liberation Sans" font-size="8" fill="#3a2e0c" text-anchor="middle" dominant-baseline="central" transform="rotate(30.3 464.8 507.6)">400</text>
<text x="486.1" y="522.2" font-family="Liberation Sans" font-size="8" fill="#3a2e0c" text-anchor="middle" dominant-baseline="central" transform="rotate(38.2 486.1 522.2)">500</text>
<text x="505.3" y="539.5" font-family="Liberation Sans" font-size="8" fill="#3a2e0c" text-anchor="middle" dominant-baseline="central" transform="rotate(46 505.3 539.5)">600</text>
<text x="522" y="559.3" font-family="Liberation Sans" font-size="8" fill="#3a2e0c" text-anchor="middle" dominant-baseline="central" transform="rotate(53.9 522 559.3)">700</text>
<text x="535.7" y="581.2" font-family="Liberation Sans" font-size="8" fill="#3a2e0c" text-anchor="middle" dominant-baseline="central" transform="rotate(61.8 535.7 581.2)">800</text>
<text x="546.3" y="604.8" font-family="Liberation Sans" font-size="8" fill="#3a2e0c" text-anchor="middle" dominant-baseline="central" transform="rotate(69.7 546.3 604.8)">900</text>
<text x="553.6" y="629.6" font-family="Liberation Sans" font-size="8" fill="#3a2e0c" text-anchor="middle" dominant-baseline="central" transform="rotate(77.6 553.6 629.6)">1000</text>
<text x="557.7" y="659.6" font-family="Liberation Sans" font-size="8" fill="#3a2e0c" text-anchor="middle" dominant-baseline="central" transform="rotate(86.8 557.7 659.6)">1100</text>
<text x="556.9" y="689.9" font-family="Liberation Sans" font-size="8" fill="#3a2e0c" text-anchor="middle" dominant-baseline="central" transform="rotate(96.1 556.9 689.9)">1200</text>
<text x="551.3" y="719.7" font-family="Liberation Sans" font-size="8" fill="#3a2e0c" text-anchor="middle" dominant-baseline="central" transform="rotate(105.3 551.3 719.7)">1300</text>
<text x="541" y="748.1" font-family="Liberation Sans" font-size="8" fill="#3a2e0c" text-anchor="middle" dominant-baseline="central" transform="rotate(114.6 541 748.1)">1400</text>
<text x="526.2" y="774.6" font-family="Liberation Sans" font-size="8" fill="#3a2e0c" text-anchor="middle" dominant-baseline="central" transform="rotate(123.8 526.2 774.6)">1500</text>
<text x="507.4" y="798.3" font-family="Liberation Sans" font-size="8" fill="#3a2e0c" text-anchor="middle" dominant-baseline="central" transform="rotate(133 507.4 798.3)">1600</text>
<text x="485" y="818.7" font-family="Liberation Sans" font-size="8" fill="#3a2e0c" text-anchor="middle" dominant-baseline="central" transform="rotate(142.3 485 818.7)">1700</text>
<text x="459.6" y="835.2" font-family="Liberation Sans" font-size="8" fill="#3a2e0c" text-anchor="middle" dominant-baseline="central" transform="rotate(151.5 459.6 835.2)">1800</text>
<text x="432" y="847.5" font-family="Liberation Sans" font-size="8" fill="#3a2e0c" text-anchor="middle" dominant-baseline="central" transform="rotate(160.8 432 847.5)">1900</text>
<text x="402.6" y="855.1" font-family="Liberation Sans" font-size="8" fill="#3a2e0c" text-anchor="middle" dominant-baseline="central" transform="rotate(170 402.6 855.1)">2000</text>
<text x="371.6" y="858" font-family="Liberation Sans" font-size="8" fill="#3a2e0c" text-anchor="middle" dominant-baseline="central" transform="rotate(179.5 371.6 858)">2100</text>
<text x="340.6" y="855.7" font-family="Liberation Sans" font-size="8" fill="#3a2e0c" text-anchor="middle" dominant-baseline="central" transform="rotate(189 340.6 855.7)">2200</text>
<text x="310.3" y="848.3" font-family="Liberation Sans" font-size="8" fill="#3a2e0c" text-anchor="middle" dominant-baseline="central" transform="rotate(198.5 310.3 848.3)">2300</text>
<text x="281.7" y="836" font-family="Liberation Sans" font-size="8" fill="#3a2e0c" text-anchor="middle" dominant-baseline="central" transform="rotate(208 281.7 836)">2400</text>
<text x="255.6" y="819.2" font-family="Liberation Sans" font-size="8" fill="#3a2e0c" text-anchor="middle" dominant-baseline="central" transform="rotate(217.5 255.6 819.2)">2500</text>
<text x="232.5" y="798.2" font-family="Liberation Sans" font-size="8" fill="#3a2e0c" text-anchor="middle" dominant-baseline="central" transform="rotate(227 232.5 798.2)">2600</text>
<text x="213.2" y="773.8" font-family="Liberation Sans" font-size="8" fill="#3a2e0c" text-anchor="middle" dominant-baseline="central" transform="rotate(236.5 213.2 773.8)">2700</text>
<text x="198.3" y="746.5" font-family="Liberation Sans" font-size="8" fill="#3a2e0c" text-anchor="middle" dominant-baseline="central" transform="rotate(246 198.3 746.5)">2800</text>
<text x="188" y="717.1" font-family="Liberation Sans" font-size="8" fill="#3a2e0c" text-anchor="middle" dominant-baseline="central" transform="rotate(255.5 188 717.1)">2900</text>
<text x="182.7" y="686.4" font-family="Liberation Sans" font-size="8" fill="#3a2e0c" text-anchor="middle" dominant-baseline="central" transform="rotate(265 182.7 686.4)">3000</text>
<text x="182.6" y="655.2" font-family="Liberation Sans" font-size="8" fill="#3a2e0c" text-anchor="middle" dominant-baseline="central" transform="rotate(274.5 182.6 655.2)">3100</text>
<text x="187.6" y="624.5" font-family="Liberation Sans" font-size="8" fill="#3a2e0c" text-anchor="middle" dominant-baseline="central" transform="rotate(284 187.6 624.5)">3200</text>
<text x="197.6" y="595" font-family="Liberation Sans" font-size="8" fill="#3a2e0c" text-anchor="middle" dominant-baseline="central" transform="rotate(293.5 197.6 595)">3300</text>
<text x="212.3" y="567.6" font-family="Liberation Sans" font-size="8" fill="#3a2e0c" text-anchor="middle" dominant-baseline="central" transform="rotate(303 212.3 567.6)">3400</text>
<text x="231.4" y="543" font-family="Liberation Sans" font-size="8" fill="#3a2e0c" text-anchor="middle" dominant-baseline="central" transform="rotate(312.5 231.4 543)">3500</text>
<text x="254.3" y="521.9" font-family="Liberation Sans" font-size="8" fill="#3a2e0c" text-anchor="middle" dominant-baseline="central" transform="rotate(322 254.3 521.9)">3600</text>
<text x="280.3" y="504.8" font-family="Liberation Sans" font-size="8" fill="#3a2e0c" text-anchor="middle" dominant-baseline="central" transform="rotate(331.5 280.3 504.8)">3700</text>
<text x="308.8" y="492.2" font-family="Liberation Sans" font-size="8" fill="#3a2e0c" text-anchor="middle" dominant-baseline="central" transform="rotate(341 308.8 492.2)">3800</text>
<text x="340.6" y="484.3" font-family="Liberation Sans" font-size="8" fill="#3a2e0c" text-anchor="middle" dominant-baseline="central" transform="rotate(351 340.6 484.3)">3900</text>
<circle cx="370" cy="670" r="183.5" fill="none" stroke="#3a2c08" stroke-width="5" stroke-dasharray="3 2.1"/>
<foreignObject x="188" y="488" width="364" height="364"><div style="width:364px;height:364px;border-radius:50%;background:conic-gradient(from 0deg,#2a2a1e 0deg,#34332a 15deg,#5a5946 35deg,#74735e 52deg,#6a6955 70deg,#3a392c 92deg,#1a1a14 110deg,#0e0e0c 130deg,#101010 180deg,#1c1c14 215deg,#26261c 250deg,#2a2a1e 300deg,#2a2a1e 360deg)"></div></foreignObject>
<foreignObject x="226" y="526" width="288" height="288"><div style="width:288px;height:288px;border-radius:50%;background:conic-gradient(from 0deg,#141410 0deg,#1a1a14 16deg,#52513c 17deg,#64634d 45deg,#8a8a72 46deg,#7c7b64 62deg,#3c3b2c 92deg,#0e0e0c 120deg,#070707 160deg,#0a0a08 196deg,#3a3826 197deg,#2a291c 219deg,#0d0d0b 220deg,#0a0a08 270deg,#0c0c0a 330deg,#141410 360deg)"></div></foreignObject>
<circle cx="370" cy="670" r="182" fill="none" stroke="#1a1808" stroke-width="2"/>
<path d="M387.2 505.9L388.1 497.9M404.3 508.6L406 500.8M421 513.1L423.5 505.5M437.1 519.3L440.4 512M467 536.5L471.7 530M480.4 547.4L485.8 541.4M492.6 559.6L498.6 554.2M503.5 573L510 568.3M520.7 602.9L528 599.6M526.9 619L534.5 616.5M531.4 635.7L539.2 634M534.1 652.8L542.1 651.9M534.1 687.2L542.1 688.1M531.4 704.3L539.2 706M526.9 721L534.5 723.5M520.7 737.1L528 740.4M503.5 767L510 771.7M492.6 780.4L498.6 785.8M480.4 792.6L485.8 798.6M467 803.5L471.7 810M437.1 820.7L440.4 828M421 826.9L423.5 834.5M404.3 831.4L406 839.2M387.2 834.1L388.1 842.1M352.8 834.1L351.9 842.1M335.7 831.4L334 839.2M319 826.9L316.5 834.5M302.9 820.7L299.6 828M273 803.5L268.3 810M259.6 792.6L254.2 798.6M247.4 780.4L241.4 785.8M236.5 767L230 771.7M219.3 737.1L212 740.4M213.1 721L205.5 723.5M208.6 704.3L200.8 706M205.9 687.2L197.9 688.1M205.9 652.8L197.9 651.9M208.6 635.7L200.8 634M213.1 619L205.5 616.5M219.3 602.9L212 599.6M236.5 573L230 568.3M247.4 559.6L241.4 554.2M259.6 547.4L254.2 541.4M273 536.5L268.3 530M302.9 519.3L299.6 512M319 513.1L316.5 505.5M335.7 508.6L334 500.8M352.8 505.9L351.9 497.9" stroke="#d8d0b0" stroke-width="1.2" opacity=".8"/>
<path d="M370 520L370 513M373.9 520.1L374 516.1M377.9 520.2L378.1 516.2M381.8 520.5L382.1 516.5M385.7 520.8L386.4 513.9M389.6 521.3L390.1 517.3M393.5 521.8L394.1 517.9M397.3 522.5L398.1 518.6M401.2 523.3L402.6 516.4M405 524.1L406 520.3M408.8 525.1L409.9 521.2M412.6 526.2L413.7 522.3M416.4 527.3L418.5 520.7M420.1 528.6L421.4 524.8M423.8 530L425.2 526.2M427.4 531.4L428.9 527.7M431 533L433.9 526.6M434.6 534.6L436.3 531M438.1 536.3L439.9 532.8M441.6 538.2L443.5 534.7M445 540.1L448.5 534M448.4 542.1L450.5 538.7M451.7 544.2L453.9 540.8M455 546.4L457.2 543.1M458.2 548.6L462.3 543M461.3 551L463.7 547.8M464.4 553.4L466.9 550.3M467.4 555.9L470 552.9M470.4 558.5L475.1 553.3M473.3 561.2L476 558.3M476.1 563.9L478.9 561.1M478.8 566.7L481.7 564M481.5 569.6L486.7 564.9M484.1 572.6L487.1 570M486.6 575.6L489.7 573.1M489 578.7L492.2 576.3M491.4 581.8L497 577.7M493.6 585L496.9 582.8M495.8 588.3L499.2 586.1M497.9 591.6L501.3 589.5M499.9 595L506 591.5M501.8 598.4L505.3 596.5M503.7 601.9L507.2 600.1M505.4 605.4L509 603.7M507 609L513.4 606.1M508.6 612.6L512.3 611.1M510 616.2L513.8 614.8M511.4 619.9L515.2 618.6M512.7 623.6L519.3 621.5M513.8 627.4L517.7 626.3M514.9 631.2L518.8 630.1M515.9 635L519.7 634M516.7 638.8L523.6 637.4M517.5 642.7L521.4 641.9M518.2 646.5L522.1 645.9M518.7 650.4L522.7 649.9M519.2 654.3L526.1 653.6M519.5 658.2L523.5 657.9M519.8 662.1L523.8 661.9M519.9 666.1L523.9 666M520 670L527 670M519.9 673.9L523.9 674M519.8 677.9L523.8 678.1M519.5 681.8L523.5 682.1M519.2 685.7L526.1 686.4M518.7 689.6L522.7 690.1M518.2 693.5L522.1 694.1M517.5 697.3L521.4 698.1M516.7 701.2L523.6 702.6M515.9 705L519.7 706M514.9 708.8L518.8 709.9M513.8 712.6L517.7 713.7M512.7 716.4L519.3 718.5M511.4 720.1L515.2 721.4M510 723.8L513.8 725.2M508.6 727.4L512.3 728.9M507 731L513.4 733.9M505.4 734.6L509 736.3M503.7 738.1L507.2 739.9M501.8 741.6L505.3 743.5M499.9 745L506 748.5M497.9 748.4L501.3 750.5M495.8 751.7L499.2 753.9M493.6 755L496.9 757.2M491.4 758.2L497 762.3M489 761.3L492.2 763.7M486.6 764.4L489.7 766.9M484.1 767.4L487.1 770M481.5 770.4L486.7 775.1M478.8 773.3L481.7 776M476.1 776.1L478.9 778.9M473.3 778.8L476 781.7M470.4 781.5L475.1 786.7M467.4 784.1L470 787.1M464.4 786.6L466.9 789.7M461.3 789L463.7 792.2M458.2 791.4L462.3 797M455 793.6L457.2 796.9M451.7 795.8L453.9 799.2M448.4 797.9L450.5 801.3M445 799.9L448.5 806M441.6 801.8L443.5 805.3M438.1 803.7L439.9 807.2M434.6 805.4L436.3 809M431 807L433.9 813.4M427.4 808.6L428.9 812.3M423.8 810L425.2 813.8M420.1 811.4L421.4 815.2M416.4 812.7L418.5 819.3M412.6 813.8L413.7 817.7M408.8 814.9L409.9 818.8M405 815.9L406 819.7M401.2 816.7L402.6 823.6M397.3 817.5L398.1 821.4M393.5 818.2L394.1 822.1M389.6 818.7L390.1 822.7M385.7 819.2L386.4 826.1M381.8 819.5L382.1 823.5M377.9 819.8L378.1 823.8M373.9 819.9L374 823.9M370 820L370 827M366.1 819.9L366 823.9M362.1 819.8L361.9 823.8M358.2 819.5L357.9 823.5M354.3 819.2L353.6 826.1M350.4 818.7L349.9 822.7M346.5 818.2L345.9 822.1M342.7 817.5L341.9 821.4M338.8 816.7L337.4 823.6M335 815.9L334 819.7M331.2 814.9L330.1 818.8M327.4 813.8L326.3 817.7M323.6 812.7L321.5 819.3M319.9 811.4L318.6 815.2M316.2 810L314.8 813.8M312.6 808.6L311.1 812.3M309 807L306.1 813.4M305.4 805.4L303.7 809M301.9 803.7L300.1 807.2M298.4 801.8L296.5 805.3M295 799.9L291.5 806M291.6 797.9L289.5 801.3M288.3 795.8L286.1 799.2M285 793.6L282.8 796.9M281.8 791.4L277.7 797M278.7 789L276.3 792.2M275.6 786.6L273.1 789.7M272.6 784.1L270 787.1M269.6 781.5L264.9 786.7M266.7 778.8L264 781.7M263.9 776.1L261.1 778.9M261.2 773.3L258.3 776M258.5 770.4L253.3 775.1M255.9 767.4L252.9 770M253.4 764.4L250.3 766.9M251 761.3L247.8 763.7M248.6 758.2L243 762.3M246.4 755L243.1 757.2M244.2 751.7L240.8 753.9M242.1 748.4L238.7 750.5M240.1 745L234 748.5M238.2 741.6L234.7 743.5M236.3 738.1L232.8 739.9M234.6 734.6L231 736.3M233 731L226.6 733.9M231.4 727.4L227.7 728.9M230 723.8L226.2 725.2M228.6 720.1L224.8 721.4M227.3 716.4L220.7 718.5M226.2 712.6L222.3 713.7M225.1 708.8L221.2 709.9M224.1 705L220.3 706M223.3 701.2L216.4 702.6M222.5 697.3L218.6 698.1M221.8 693.5L217.9 694.1M221.3 689.6L217.3 690.1M220.8 685.7L213.9 686.4M220.5 681.8L216.5 682.1M220.2 677.9L216.2 678.1M220.1 673.9L216.1 674M220 670L213 670M220.1 666.1L216.1 666M220.2 662.1L216.2 661.9M220.5 658.2L216.5 657.9M220.8 654.3L213.9 653.6M221.3 650.4L217.3 649.9M221.8 646.5L217.9 645.9M222.5 642.7L218.6 641.9M223.3 638.8L216.4 637.4M224.1 635L220.3 634M225.1 631.2L221.2 630.1M226.2 627.4L222.3 626.3M227.3 623.6L220.7 621.5M228.6 619.9L224.8 618.6M230 616.2L226.2 614.8M231.4 612.6L227.7 611.1M233 609L226.6 606.1M234.6 605.4L231 603.7M236.3 601.9L232.8 600.1M238.2 598.4L234.7 596.5M240.1 595L234 591.5M242.1 591.6L238.7 589.5M244.2 588.3L240.8 586.1M246.4 585L243.1 582.8M248.6 581.8L243 577.7M251 578.7L247.8 576.3M253.4 575.6L250.3 573.1M255.9 572.6L252.9 570M258.5 569.6L253.3 564.9M261.2 566.7L258.3 564M263.9 563.9L261.1 561.1M266.7 561.2L264 558.3M269.6 558.5L264.9 553.3M272.6 555.9L270 552.9M275.6 553.4L273.1 550.3M278.7 551L276.3 547.8M281.8 548.6L277.7 543M285 546.4L282.8 543.1M288.3 544.2L286.1 540.8M291.6 542.1L289.5 538.7M295 540.1L291.5 534M298.4 538.2L296.5 534.7M301.9 536.3L300.1 532.8M305.4 534.6L303.7 531M309 533L306.1 526.6M312.6 531.4L311.1 527.7M316.2 530L314.8 526.2M319.9 528.6L318.6 524.8M323.6 527.3L321.5 520.7M327.4 526.2L326.3 522.3M331.2 525.1L330.1 521.2M335 524.1L334 520.3M338.8 523.3L337.4 516.4M342.7 522.5L341.9 518.6M346.5 521.8L345.9 517.9M350.4 521.3L349.9 517.3M354.3 520.8L353.6 513.9M358.2 520.5L357.9 516.5M362.1 520.2L361.9 516.2M366.1 520.1L366 516.1" stroke="#8a7a40" stroke-width=".8" opacity=".8"/>
<circle cx="370" cy="670" r="150" fill="none" stroke="#8a7a40" stroke-width=".8"/>
<line x1="450" y1="531.4" x2="459.5" y2="515" stroke="#3a2a08" stroke-width="5.5"/>
<line x1="450" y1="531.4" x2="459.5" y2="515" stroke="#f0dc98" stroke-width="3.5"/>
<line x1="508.6" y1="590" x2="525" y2="580.5" stroke="#3a2a08" stroke-width="5.5"/>
<line x1="508.6" y1="590" x2="525" y2="580.5" stroke="#f0dc98" stroke-width="3.5"/>
<line x1="508.6" y1="750" x2="525" y2="759.5" stroke="#3a2a08" stroke-width="5.5"/>
<line x1="508.6" y1="750" x2="525" y2="759.5" stroke="#f0dc98" stroke-width="3.5"/>
<line x1="450" y1="808.6" x2="459.5" y2="825" stroke="#3a2a08" stroke-width="5.5"/>
<line x1="450" y1="808.6" x2="459.5" y2="825" stroke="#f0dc98" stroke-width="3.5"/>
<line x1="290" y1="808.6" x2="280.5" y2="825" stroke="#3a2a08" stroke-width="5.5"/>
<line x1="290" y1="808.6" x2="280.5" y2="825" stroke="#f0dc98" stroke-width="3.5"/>
<line x1="231.4" y1="750" x2="215" y2="759.5" stroke="#3a2a08" stroke-width="5.5"/>
<line x1="231.4" y1="750" x2="215" y2="759.5" stroke="#f0dc98" stroke-width="3.5"/>
<line x1="231.4" y1="590" x2="215" y2="580.5" stroke="#3a2a08" stroke-width="5.5"/>
<line x1="231.4" y1="590" x2="215" y2="580.5" stroke="#f0dc98" stroke-width="3.5"/>
<line x1="290" y1="531.4" x2="280.5" y2="515" stroke="#3a2a08" stroke-width="5.5"/>
<line x1="290" y1="531.4" x2="280.5" y2="515" stroke="#f0dc98" stroke-width="3.5"/>
<text x="367" y="514" font-family="Liberation Sans" font-weight="bold" font-size="33" fill="#f0e6c0" stroke="#241a04" stroke-width="3.5" paint-order="stroke" text-anchor="middle" letter-spacing="-1.5" transform="translate(367 514) scale(1.12 1) translate(-367 -514)">12</text>
<text x="367" y="514" font-family="Liberation Sans" font-weight="bold" font-size="33" fill="#f0e6c0" stroke="#e8dcb0" stroke-width="1.2" text-anchor="middle" letter-spacing="-1.5" transform="translate(367 514) scale(1.12 1) translate(-367 -514)">12</text>
<text x="536" y="682" font-family="Liberation Sans" font-weight="bold" font-size="33" fill="#f0e6c0" stroke="#241a04" stroke-width="3.5" paint-order="stroke" text-anchor="middle" letter-spacing="-1.5" transform="translate(536 682) scale(1.12 1) translate(-536 -682)">3</text>
<text x="536" y="682" font-family="Liberation Sans" font-weight="bold" font-size="33" fill="#f0e6c0" stroke="#e8dcb0" stroke-width="1.2" text-anchor="middle" letter-spacing="-1.5" transform="translate(536 682) scale(1.12 1) translate(-536 -682)">3</text>
<text x="369" y="847" font-family="Liberation Sans" font-weight="bold" font-size="33" fill="#f0e6c0" stroke="#241a04" stroke-width="3.5" paint-order="stroke" text-anchor="middle" letter-spacing="-1.5" transform="translate(369 847) scale(1.12 1) translate(-369 -847)">6</text>
<text x="369" y="847" font-family="Liberation Sans" font-weight="bold" font-size="33" fill="#f0e6c0" stroke="#e8dcb0" stroke-width="1.2" text-anchor="middle" letter-spacing="-1.5" transform="translate(369 847) scale(1.12 1) translate(-369 -847)">6</text>
<text x="202" y="682" font-family="Liberation Sans" font-weight="bold" font-size="33" fill="#f0e6c0" stroke="#241a04" stroke-width="3.5" paint-order="stroke" text-anchor="middle" letter-spacing="-1.5" transform="translate(202 682) scale(1.12 1) translate(-202 -682)">9</text>
<text x="202" y="682" font-family="Liberation Sans" font-weight="bold" font-size="33" fill="#f0e6c0" stroke="#e8dcb0" stroke-width="1.2" text-anchor="middle" letter-spacing="-1.5" transform="translate(202 682) scale(1.12 1) translate(-202 -682)">9</text>
<text x="369" y="809" font-family="Liberation Sans" font-size="6" fill="#e0d8b8" text-anchor="middle" letter-spacing="1.3">TACHYMETRE</text>
<path d="M360 470 L378 470 L369 488 Z" fill="#f8f0d0" stroke="#8a7030" stroke-width=".8"/>
<linearGradient id="gPlate" x1="0" y1="0" x2="1" y2="1"><stop offset="0" stop-color="#f8f8f6"/><stop offset=".5" stop-color="#d8d8d4"/><stop offset="1" stop-color="#9a9a96"/></linearGradient>
<linearGradient id="gBr" x1="0" y1="0" x2="1" y2="0"><stop offset="0" stop-color="#c89838"/><stop offset=".4" stop-color="#f0d080"/><stop offset="1" stop-color="#b08828"/></linearGradient>
<g clip-path="url(#cWin)"><rect x="250" y="520" width="240" height="110" fill="#121210"/>
<path d="M258 600 Q300 545 350 527 L372 527 Q380 570 365 603 Q345 600 330 585 Q300 565 262 585 Z" fill="url(#gPlate)"/>
<path d="M262 585 Q300 565 330 585 Q345 600 352 620 L300 620 Z" fill="#1a1a16"/>
<path d="M270 590 Q305 575 335 600" stroke="#5a5a50" stroke-width="2" fill="none"/>
<circle cx="331" cy="553" r="6" fill="#e8e8e4" stroke="#8a8a86" stroke-width="1"/><path d="M327 556 L335 550" stroke="#6a6a66" stroke-width="1.2"/>
<circle cx="346" cy="585" r="6" fill="#c0a098" stroke="#9a7070"/><circle cx="346" cy="585" r="3" fill="#b05a50"/>
<circle cx="398" cy="570" r="33" fill="none" stroke="#c8a030" stroke-width="5" stroke-dasharray="2 2.2"/>
<path d="M380 530 L402 528 L405 560 Q408 580 398 600 L396 620 L382 620 Q376 590 372 570 Q370 548 380 530Z" fill="url(#gBr)" stroke="#8a6a20" stroke-width=".8"/>
<circle cx="387" cy="567" r="7" fill="#d8b048" stroke="#8a6a20"/><circle cx="387" cy="567" r="3" fill="#9a7820"/>
<circle cx="382" cy="540" r="6" fill="#c8c0a8" stroke="#8a8070"/>
<circle cx="447" cy="558" r="16" fill="#a89878" opacity=".85"/><circle cx="450" cy="555" r="9" fill="#c8b898" opacity=".7"/>
<circle cx="378" cy="612" r="12" fill="#7a7058"/>
<path d="M365 575 L372 600 M352 600 L370 590" stroke="#d0b040" stroke-width="2"/>
</g>
<path d="M259 575 A142 142 0 0 1 476 575" fill="none" stroke="#8a7a40" stroke-width="1"/>
<path d="M259 575 Q316 580 338 618 L400 618 Q425 580 476 575" fill="none" stroke="#d8b858" stroke-width="2.4"/>
<path d="M264 575 A136 136 0 0 1 362 527" fill="none" stroke="#c8a848" stroke-width="1.5"/>
<radialGradient id="gSubF" cx=".5" cy=".5" r=".5"><stop offset=".6" stop-color="#fbf2d4"/><stop offset=".85" stop-color="#f0dca0"/><stop offset="1" stop-color="#dcc070"/></radialGradient>
<linearGradient id="gSubB" x1="0" y1="0" x2="0" y2="1"><stop offset="0" stop-color="#b08a30"/><stop offset=".5" stop-color="#d8b050"/><stop offset="1" stop-color="#a88028"/></linearGradient>
<circle cx="278" cy="671" r="62" fill="#1a1608" opacity=".6"/><circle cx="278" cy="671" r="60.5" fill="#fffaf0"/><circle cx="278" cy="671" r="58" fill="url(#gSubB)"/><path d="M278 621.5L278 614M280.6 621.6L281 614.1M283.2 621.8L284 614.3M285.7 622.1L286.9 614.7M288.3 622.6L289.9 615.2M290.8 623.2L292.8 615.9M293.3 623.9L295.6 616.8M295.7 624.8L298.4 617.8M298.1 625.8L301.2 618.9M300.5 626.9L303.9 620.2M302.8 628.1L306.5 621.6M305 629.5L309 623.2M307.1 631L311.5 624.9M309.2 632.5L313.9 626.7M311.1 634.2L316.1 628.6M313 636L318.3 630.7M314.8 637.9L320.4 632.9M316.5 639.8L322.3 635.1M318 641.9L324.1 637.5M319.5 644L325.8 640M320.9 646.2L327.4 642.5M322.1 648.5L328.8 645.1M323.2 650.9L330.1 647.8M324.2 653.3L331.2 650.6M325.1 655.7L332.2 653.4M325.8 658.2L333.1 656.2M326.4 660.7L333.8 659.1M326.9 663.3L334.3 662.1M327.2 665.8L334.7 665M327.4 668.4L334.9 668M327.5 671L335 671M327.4 673.6L334.9 674M327.2 676.2L334.7 677M326.9 678.7L334.3 679.9M326.4 681.3L333.8 682.9M325.8 683.8L333.1 685.8M325.1 686.3L332.2 688.6M324.2 688.7L331.2 691.4M323.2 691.1L330.1 694.2M322.1 693.5L328.8 696.9M320.9 695.8L327.4 699.5M319.5 698L325.8 702M318 700.1L324.1 704.5M316.5 702.2L322.3 706.9M314.8 704.1L320.4 709.1M313 706L318.3 711.3M311.1 707.8L316.1 713.4M309.2 709.5L313.9 715.3M307.1 711L311.5 717.1M305 712.5L309 718.8M302.8 713.9L306.5 720.4M300.5 715.1L303.9 721.8M298.1 716.2L301.2 723.1M295.7 717.2L298.4 724.2M293.3 718.1L295.6 725.2M290.8 718.8L292.8 726.1M288.3 719.4L289.9 726.8M285.7 719.9L286.9 727.3M283.2 720.2L284 727.7M280.6 720.4L281 727.9M278 720.5L278 728M275.4 720.4L275 727.9M272.8 720.2L272 727.7M270.3 719.9L269.1 727.3M267.7 719.4L266.1 726.8M265.2 718.8L263.2 726.1M262.7 718.1L260.4 725.2M260.3 717.2L257.6 724.2M257.9 716.2L254.8 723.1M255.5 715.1L252.1 721.8M253.2 713.9L249.5 720.4M251 712.5L247 718.8M248.9 711L244.5 717.1M246.8 709.5L242.1 715.3M244.9 707.8L239.9 713.4M243 706L237.7 711.3M241.2 704.1L235.6 709.1M239.5 702.2L233.7 706.9M238 700.1L231.9 704.5M236.5 698L230.2 702M235.1 695.8L228.6 699.5M233.9 693.5L227.2 696.9M232.8 691.1L225.9 694.2M231.8 688.7L224.8 691.4M230.9 686.3L223.8 688.6M230.2 683.8L222.9 685.8M229.6 681.3L222.2 682.9M229.1 678.7L221.7 679.9M228.8 676.2L221.3 677M228.6 673.6L221.1 674M228.5 671L221 671M228.6 668.4L221.1 668M228.8 665.8L221.3 665M229.1 663.3L221.7 662.1M229.6 660.7L222.2 659.1M230.2 658.2L222.9 656.2M230.9 655.7L223.8 653.4M231.8 653.3L224.8 650.6M232.8 650.9L225.9 647.8M233.9 648.5L227.2 645.1M235.1 646.2L228.6 642.5M236.5 644L230.2 640M238 641.9L231.9 637.5M239.5 639.8L233.7 635.1M241.2 637.9L235.6 632.9M243 636L237.7 630.7M244.9 634.2L239.9 628.6M246.8 632.5L242.1 626.7M248.9 631L244.5 624.9M251 629.5L247 623.2M253.2 628.1L249.5 621.6M255.5 626.9L252.1 620.2M257.9 625.8L254.8 618.9M260.3 624.8L257.6 617.8M262.7 623.9L260.4 616.8M265.2 623.2L263.2 615.9M267.7 622.6L266.1 615.2M270.3 622.1L269.1 614.7M272.8 621.8L272 614.3M275.4 621.6L275 614.1" stroke="#7a5810" stroke-width="1" opacity=".75"/><circle cx="278" cy="671" r="49.5" fill="url(#gSubF)"/><text x="278" y="631" font-family="Liberation Sans" font-weight="bold" font-size="10" fill="#4a3c14" text-anchor="middle" dominant-baseline="central" transform="rotate(0 278 631)">50</text><text x="300.9" y="638.2" font-family="Liberation Sans" font-weight="bold" font-size="10" fill="#4a3c14" text-anchor="middle" dominant-baseline="central" transform="rotate(35 300.9 638.2)">5</text><text x="315.6" y="657.3" font-family="Liberation Sans" font-weight="bold" font-size="10" fill="#4a3c14" text-anchor="middle" dominant-baseline="central" transform="rotate(70 315.6 657.3)">10</text><text x="255.1" y="638.2" font-family="Liberation Sans" font-weight="bold" font-size="10" fill="#4a3c14" text-anchor="middle" dominant-baseline="central" transform="rotate(-35 255.1 638.2)">45</text><text x="240.4" y="657.3" font-family="Liberation Sans" font-weight="bold" font-size="10" fill="#4a3c14" text-anchor="middle" dominant-baseline="central" transform="rotate(-70 240.4 657.3)">40</text><text x="240.4" y="684.7" font-family="Liberation Sans" font-weight="bold" font-size="10" fill="#4a3c14" text-anchor="middle" dominant-baseline="central" transform="rotate(70 240.4 684.7)">35</text><text x="255.1" y="703.8" font-family="Liberation Sans" font-weight="bold" font-size="10" fill="#4a3c14" text-anchor="middle" dominant-baseline="central" transform="rotate(35 255.1 703.8)">30</text><circle cx="278" cy="671" r="30.5" fill="#3a2c10"/><foreignObject x="249" y="642" width="58" height="58"><div style="width:58px;height:58px;border-radius:50%;background:conic-gradient(from 0deg,#e8e8ec 0deg,#c8c8cc 40deg,#fafafa 80deg,#d8d8d8 120deg,#f4f4f4 160deg,#c0c0c8 200deg,#5a5a7a 255deg,#8a8aa0 290deg,#f0f0f0 335deg,#e8e8ec 360deg)"></div></foreignObject><g transform="translate(278 671) rotate(-135)"><path d="M-4 0 L6 -3 L55 -0.8 L55 0.8 L6 3 Z" fill="#b89238" stroke="#5a4410" stroke-width=".7"/><circle cx="0" cy="0" r="2.5" fill="#d8b860" stroke="#5a4410" stroke-width=".6"/></g>
<circle cx="460" cy="671" r="62" fill="#1a1608" opacity=".6"/><circle cx="460" cy="671" r="60.5" fill="#fffaf0"/><circle cx="460" cy="671" r="58" fill="url(#gSubB)"/><path d="M460 621.5L460 614M462.6 621.6L463 614.1M465.2 621.8L466 614.3M467.7 622.1L468.9 614.7M470.3 622.6L471.9 615.2M472.8 623.2L474.8 615.9M475.3 623.9L477.6 616.8M477.7 624.8L480.4 617.8M480.1 625.8L483.2 618.9M482.5 626.9L485.9 620.2M484.8 628.1L488.5 621.6M487 629.5L491 623.2M489.1 631L493.5 624.9M491.2 632.5L495.9 626.7M493.1 634.2L498.1 628.6M495 636L500.3 630.7M496.8 637.9L502.4 632.9M498.5 639.8L504.3 635.1M500 641.9L506.1 637.5M501.5 644L507.8 640M502.9 646.2L509.4 642.5M504.1 648.5L510.8 645.1M505.2 650.9L512.1 647.8M506.2 653.3L513.2 650.6M507.1 655.7L514.2 653.4M507.8 658.2L515.1 656.2M508.4 660.7L515.8 659.1M508.9 663.3L516.3 662.1M509.2 665.8L516.7 665M509.4 668.4L516.9 668M509.5 671L517 671M509.4 673.6L516.9 674M509.2 676.2L516.7 677M508.9 678.7L516.3 679.9M508.4 681.3L515.8 682.9M507.8 683.8L515.1 685.8M507.1 686.3L514.2 688.6M506.2 688.7L513.2 691.4M505.2 691.1L512.1 694.2M504.1 693.5L510.8 696.9M502.9 695.8L509.4 699.5M501.5 698L507.8 702M500 700.1L506.1 704.5M498.5 702.2L504.3 706.9M496.8 704.1L502.4 709.1M495 706L500.3 711.3M493.1 707.8L498.1 713.4M491.2 709.5L495.9 715.3M489.1 711L493.5 717.1M487 712.5L491 718.8M484.8 713.9L488.5 720.4M482.5 715.1L485.9 721.8M480.1 716.2L483.2 723.1M477.7 717.2L480.4 724.2M475.3 718.1L477.6 725.2M472.8 718.8L474.8 726.1M470.3 719.4L471.9 726.8M467.7 719.9L468.9 727.3M465.2 720.2L466 727.7M462.6 720.4L463 727.9M460 720.5L460 728M457.4 720.4L457 727.9M454.8 720.2L454 727.7M452.3 719.9L451.1 727.3M449.7 719.4L448.1 726.8M447.2 718.8L445.2 726.1M444.7 718.1L442.4 725.2M442.3 717.2L439.6 724.2M439.9 716.2L436.8 723.1M437.5 715.1L434.1 721.8M435.2 713.9L431.5 720.4M433 712.5L429 718.8M430.9 711L426.5 717.1M428.8 709.5L424.1 715.3M426.9 707.8L421.9 713.4M425 706L419.7 711.3M423.2 704.1L417.6 709.1M421.5 702.2L415.7 706.9M420 700.1L413.9 704.5M418.5 698L412.2 702M417.1 695.8L410.6 699.5M415.9 693.5L409.2 696.9M414.8 691.1L407.9 694.2M413.8 688.7L406.8 691.4M412.9 686.3L405.8 688.6M412.2 683.8L404.9 685.8M411.6 681.3L404.2 682.9M411.1 678.7L403.7 679.9M410.8 676.2L403.3 677M410.6 673.6L403.1 674M410.5 671L403 671M410.6 668.4L403.1 668M410.8 665.8L403.3 665M411.1 663.3L403.7 662.1M411.6 660.7L404.2 659.1M412.2 658.2L404.9 656.2M412.9 655.7L405.8 653.4M413.8 653.3L406.8 650.6M414.8 650.9L407.9 647.8M415.9 648.5L409.2 645.1M417.1 646.2L410.6 642.5M418.5 644L412.2 640M420 641.9L413.9 637.5M421.5 639.8L415.7 635.1M423.2 637.9L417.6 632.9M425 636L419.7 630.7M426.9 634.2L421.9 628.6M428.8 632.5L424.1 626.7M430.9 631L426.5 624.9M433 629.5L429 623.2M435.2 628.1L431.5 621.6M437.5 626.9L434.1 620.2M439.9 625.8L436.8 618.9M442.3 624.8L439.6 617.8M444.7 623.9L442.4 616.8M447.2 623.2L445.2 615.9M449.7 622.6L448.1 615.2M452.3 622.1L451.1 614.7M454.8 621.8L454 614.3M457.4 621.6L457 614.1" stroke="#7a5810" stroke-width="1" opacity=".75"/><circle cx="460" cy="671" r="49.5" fill="url(#gSubF)"/><text x="460" y="631" font-family="Liberation Sans" font-weight="bold" font-size="10" fill="#4a3c14" text-anchor="middle" dominant-baseline="central" transform="rotate(0 460 631)">100</text><text x="482.9" y="638.2" font-family="Liberation Sans" font-weight="bold" font-size="10" fill="#4a3c14" text-anchor="middle" dominant-baseline="central" transform="rotate(35 482.9 638.2)">10</text><text x="497.6" y="657.3" font-family="Liberation Sans" font-weight="bold" font-size="10" fill="#4a3c14" text-anchor="middle" dominant-baseline="central" transform="rotate(70 497.6 657.3)">20</text><text x="497.6" y="684.7" font-family="Liberation Sans" font-weight="bold" font-size="10" fill="#4a3c14" text-anchor="middle" dominant-baseline="central" transform="rotate(290 497.6 684.7)">30</text><text x="482.9" y="703.8" font-family="Liberation Sans" font-weight="bold" font-size="10" fill="#4a3c14" text-anchor="middle" dominant-baseline="central" transform="rotate(325 482.9 703.8)">40</text><text x="460" y="711" font-family="Liberation Sans" font-weight="bold" font-size="10" fill="#4a3c14" text-anchor="middle" dominant-baseline="central" transform="rotate(360 460 711)">50</text><text x="437.1" y="703.8" font-family="Liberation Sans" font-weight="bold" font-size="10" fill="#4a3c14" text-anchor="middle" dominant-baseline="central" transform="rotate(35 437.1 703.8)">60</text><text x="422.4" y="684.7" font-family="Liberation Sans" font-weight="bold" font-size="10" fill="#4a3c14" text-anchor="middle" dominant-baseline="central" transform="rotate(70 422.4 684.7)">70</text><text x="422.4" y="657.3" font-family="Liberation Sans" font-weight="bold" font-size="10" fill="#4a3c14" text-anchor="middle" dominant-baseline="central" transform="rotate(-70 422.4 657.3)">80</text><text x="437.1" y="638.2" font-family="Liberation Sans" font-weight="bold" font-size="10" fill="#4a3c14" text-anchor="middle" dominant-baseline="central" transform="rotate(-35 437.1 638.2)">90</text><circle cx="460" cy="671" r="30.5" fill="#3a2c10"/><foreignObject x="431" y="642" width="58" height="58"><div style="width:58px;height:58px;border-radius:50%;background:conic-gradient(from 0deg,#e8e8ec 0deg,#c8c8cc 40deg,#fafafa 80deg,#d8d8d8 120deg,#f4f4f4 160deg,#c0c0c8 200deg,#5a5a7a 255deg,#8a8aa0 290deg,#f0f0f0 335deg,#e8e8ec 360deg)"></div></foreignObject><g transform="translate(460 671) rotate(-55)"><path d="M-4 0 L6 -3 L55 -0.8 L55 0.8 L6 3 Z" fill="#b89238" stroke="#5a4410" stroke-width=".7"/><circle cx="0" cy="0" r="2.5" fill="#d8b860" stroke="#5a4410" stroke-width=".6"/></g>
<linearGradient id="gHH" x1="351" y1="668" x2="361" y2="686" gradientUnits="userSpaceOnUse"><stop offset="0" stop-color="#fff2c0"/><stop offset=".45" stop-color="#e8cc78"/><stop offset=".55" stop-color="#c09838"/><stop offset="1" stop-color="#a88028"/></linearGradient>
<linearGradient id="gMH" x1="382" y1="672" x2="366" y2="684" gradientUnits="userSpaceOnUse"><stop offset="0" stop-color="#fff4c8"/><stop offset=".5" stop-color="#e0c060"/><stop offset="1" stop-color="#b08a30"/></linearGradient>
<linearGradient id="gMH2" x1="369" y1="669" x2="476" y2="810" gradientUnits="userSpaceOnUse"><stop offset="0" stop-color="#fff8d8" stop-opacity=".7"/><stop offset=".35" stop-color="#b08020" stop-opacity=".35"/><stop offset=".55" stop-color="#fff0c0" stop-opacity=".45"/><stop offset=".75" stop-color="#a07818" stop-opacity=".3"/><stop offset="1" stop-color="#fff0c0" stop-opacity=".3"/></linearGradient>
<g transform="translate(369 669) rotate(106.8)"><path d="M-28 -1.8 L212 -1 L212 1 L-28 1.8Z" fill="#f8f0c8" stroke="#5a4a20" stroke-width=".6"/></g>
<path d="M351 667 L248 723 L244 730 L262 732 L362 687 Z" fill="url(#gHH)" stroke="#4a3810" stroke-width="1"/>
<path d="M364 686 L381 671 L474 791 L476 811 L464 801 Z" fill="url(#gMH)" stroke="#4a3810" stroke-width="1"/>
<path d="M364 686 L381 671 L474 791 L476 811 L464 801 Z" fill="url(#gMH2)"/>
<circle cx="369" cy="669" r="16" fill="url(#gPiv)" stroke="#6a5018" stroke-width="1"/>
<circle cx="369" cy="669" r="11" fill="#f8ecc0" stroke="#a08030" stroke-width="1"/>
<circle cx="369" cy="669" r="6" fill="#d0b050" stroke="#6a5018" stroke-width="1"/>
<circle cx="369" cy="669" r="2.5" fill="#3a2a08"/>
</svg></div><!-- right panel -->
<div class="a" style="left:990px;top:177px;width:210px;height:998px;background:#dcdce4;border-left:1px solid #808090"></div>
<div class="a" style="left:992px;top:178px;width:208px;height:993px;border-left:1px solid #a0a0b0;border-bottom:2px solid #a0a0b0"></div>
<div class="a" style="left:992px;top:178px;width:208px;height:23px;background:linear-gradient(#b8b8cc,#d8d8e6 50%,#fafafc)"></div>
<div class="t" style="left:994px;top:184px;font-size:13px;font-weight:bold;letter-spacing:0.2px">Canvas Assistant</div>
<div class="a" style="left:993px;top:202px;width:207px;height:967px;border-left:2px solid #c0c0cc;border-top:2px solid #b8b8c4"></div>
<svg class="a" style="left:1010px;top:220px" width="150" height="32">
 <path d="M6 15l11-10 11 10v11H6z" fill="#e8f0ff" stroke="#8aa0c0" stroke-width=".8"/>
 <path d="M3 16l14-13 14 13-3 1-11-10-11 10z" fill="#e05020" stroke="#a03010" stroke-width=".8"/>
 <rect x="20" y="2" width="3" height="6" fill="#c04020"/>
 <rect x="18" y="17" width="5" height="9" fill="#3060c0"/><rect x="11" y="18" width="4" height="4" fill="#3060c0"/>
 <path d="M44 10a11 11 0 0 1 18 -1l3-4v11h-10l3-3a7 7 0 0 0-11 1z" fill="#2080e0" stroke="#1050a0" stroke-width=".6"/>
 <path d="M68 22a11 11 0 0 1-18 1l-3 4v-11h10l-3 3a7 7 0 0 0 11-1z" fill="#2080e0" stroke="#1050a0" stroke-width=".6"/>
 <circle cx="92" cy="16" r="13" fill="#1a90e0" stroke="#0a60b0"/><circle cx="92" cy="14" r="10" fill="#40b0f0"/>
 <path d="M85 16l6-6v4h8v4h-8v4z" fill="#fff"/>
 <circle cx="130" cy="16" r="13" fill="#909090" stroke="#707070"/><circle cx="130" cy="14" r="10" fill="#b0b0b0"/>
 <path d="M137 16l-6-6v4h-8v4h8v4z" fill="#e8e8e8"/>
</svg>
<div class="a" style="left:1013px;top:258px;width:187px;height:852px;background:#fff;border-left:2px solid #707078;border-top:2px solid #707078"></div>
<div class="hd" style="left:1026px;top:278px">Current State</div>
<div class="t" style="left:1026px;top:317px;font-size:14.5px;letter-spacing:0.5px;color:#303030">Multigon object selected</div>
<div class="t" style="left:1026px;top:337px;font-size:14.5px;letter-spacing:0.5px;color:#303030">document.</div>
<div class="a" style="left:1026px;top:361px;width:174px;height:2px;background:#2a6a80"></div>
<div class="hd" style="top:395px">Specific Topics</div>
<div class="lk" style="top:435px">Creating multigon objects</div>
<div class="lk" style="top:455px">Modifying multigon objects</div>
<div class="hd" style="top:493px">Related Content</div>
<div class="lk" style="top:533px">Creating cubes</div>
<div class="lk" style="top:553px">Creating spirals</div>
<div class="lk" style="top:573px">Drawing grids</div>
<div class="lk" style="top:593px">Creating calendars</div>
<div class="hd" style="top:631px">General Functionality</div>
<div class="lk" style="top:671px">Applying inks to objects</div>
<div class="lk" style="top:691px">Selecting an ink with Color</div>
<div class="lk" style="top:711px">Applying stroke to objects</div>
<div class="lk" style="top:731px">Changing the ink of a pen</div>
<div class="lk" style="top:751px">Setting object's pen ink to</div>
<div class="lk" style="top:771px">Applying different arrowheads</div>
<div class="lk" style="top:790px">end of a stroke</div>
<div class="lk" style="top:810px">Choosing line joins and ends</div>
<div class="lk" style="top:830px">Customizing parallel line styles</div>
<div class="lk" style="top:850px">Customizing neon strokes</div>
<div class="lk" style="top:870px">Customizing dashes</div>
<div class="lk" style="top:890px">Repelling text from objects</div>
<div class="lk" style="top:910px">Creating a lens</div>
<div class="lk" style="top:929px">Applying SpriteEffects</div>
<div class="lk" style="top:949px">Assigning Object Properties</div>
<div class="lk" style="top:969px">Working with the Object Specs</div>
<div class="lk" style="top:989px">Creating attribute styles</div>
<div class="lk" style="top:1009px">Converting objects and text</div>
<div class="lk" style="top:1029px">Simplifying vector paths</div>
<div class="lk" style="top:1048px">Using the Properties bar</div>
<div class="lk" style="top:1068px">Using clipping paths</div>
<div class="a" style="left:1012px;top:1120px;width:188px;height:26px;background:#fff;border:1px solid #90a8c8"></div>
<!-- bottom tab bar -->
<div class="a" style="left:0;top:1151px;width:990px;height:24px;background:#e4e4ea;border-top:1px solid #c8c8d0"></div>
<svg class="a" style="left:0;top:1152px" width="250" height="22">
 <path d="M-4 6h8v10h-8z" fill="#c8e0f8" stroke="#5080c0"/>
 <path d="M23 11l6-5v10z" fill="#d01010"/><path d="M35 6l6 5-6 5z" fill="#d01010"/>
 <path d="M144 5h8v9h-8z M148 9h8v9h-8z" fill="#e8f0f8" stroke="#7090b0"/>
 <path d="M168 5v12M176 6l-7 5 7 5z" stroke="#d01010" fill="#d01010" stroke-width="1.5"/>
 <path d="M192 6l-6 5 6 5z" fill="#d01010"/><path d="M206 6l6 5-6 5z" fill="#d01010"/>
 <path d="M224 6l7 5-7 5z M233 5v12" stroke="#d01010" fill="#d01010" stroke-width="1.5"/>
</svg>
<div class="a" style="left:48px;top:1153px;width:90px;height:20px;background:#fff;border:1px solid #7a8aa8"></div>
<div class="t" style="left:52px;top:1157px;font-size:13px">Sheet #1</div>
<div class="a" style="left:117px;top:1154px;width:20px;height:18px;background:linear-gradient(#f0f0f8,#c8cce0);border:1px solid #a0a8c8"></div>
<svg class="a" style="left:117px;top:1154px" width="20" height="18"><path d="M5 7l5 5 5-5" stroke="#303040" stroke-width="2" fill="none"/></svg>
<div class="a" style="left:140px;top:1153px;width:1px;height:20px;background:#b0b0b8"></div>
<div class="btab" style="left:240px;width:84px">bevel 2…</div>
<div class="btab" style="left:324px;width:84px">BLACK O…</div>
<div class="btab" style="left:405px;width:86px">Layer #3</div>
<div class="btab" style="left:489px;width:86px">small out…</div>
<div class="btab" style="left:571px;width:88px;padding-left:11px;letter-spacing:-0.4px">BLACK DIAL</div>
<div class="btab" style="left:655px;width:86px">60 seconds</div>
<div class="btab" style="left:738px;width:90px;background:#fff">yellow n…</div>
<div class="btab" style="left:822px;width:84px;padding-left:10px">DIALS</div>
<div class="a" style="left:908px;top:1152px;width:4px;height:20px;background:#d0d0d8;border:1px solid #b0b0c0"></div>
<div class="a" style="left:914px;top:1153px;width:19px;height:20px;border:1px solid #b8bcd0;border-radius:2px;background:linear-gradient(#fff,#dcdce8)"></div>
<svg class="a" style="left:914px;top:1153px" width="19" height="20"><path d="M11 5l-5 5 5 5" stroke="#202020" stroke-width="2.2" fill="none"/></svg>
<div class="a" style="left:945px;top:1153px;width:19px;height:20px;border:1px solid #b8bcd0;border-radius:2px;background:linear-gradient(#fff,#dcdce8)"></div>
<svg class="a" style="left:945px;top:1153px" width="19" height="20"><path d="M7 5l5 5-5 5" stroke="#202020" stroke-width="2.2" fill="none"/></svg>
<svg class="a" style="left:966px;top:1152px" width="24" height="22"><path d="M6 20l16-16M12 20l10-10M18 20l4-4" stroke="#fff" stroke-width="1.5"/><path d="M7 21l16-16M13 21l10-10M19 21l4-4" stroke="#a0a0b0" stroke-width="1"/></svg>
<!-- status bar -->
<div class="a" style="left:0;top:1175px;width:1200px;height:21px;background:#dcdce4;border-top:1px solid #c0c0cc"></div>
<div class="a" style="left:104px;top:1176px;width:1px;height:20px;background:#a0a0b0"></div>
<div class="t" style="left:108px;top:1180px;font-size:13px">X: 15.752 in Y: -3.861 in</div>
<div class="a" style="left:352px;top:1176px;width:1px;height:20px;background:#a0a0b0"></div>
<div class="t" style="left:357px;top:1180px;font-size:13px">Name:&lt;none&gt;</div>
<div class="t" style="left:475px;top:1180px;font-size:13px">#: 1802</div>
<svg class="a" style="left:529px;top:1177px" width="18" height="18"><rect x="2" y="2" width="9" height="9" fill="#f0c0f0" stroke="#a040a0"/><rect x="6" y="6" width="9" height="9" fill="#d0e0f8" stroke="#6080b0"/></svg>
<div class="t" style="left:550px;top:1180px;font-size:13px">yello…</div>
<div class="a" style="left:601px;top:1176px;width:1px;height:20px;background:#a0a0b0"></div>
<div class="t" style="left:606px;top:1180px;font-size:13px">Multigon</div>
<div class="a" style="left:689px;top:1177px;width:15px;height:15px;background:#f0d870"></div>
<div class="a" style="left:707px;top:1177px;width:15px;height:15px;background:#d0b070"></div>
<div class="t" style="left:725px;top:1180px;font-size:13px">1.00pt</div>
<div class="a" style="left:852px;top:1176px;width:1px;height:20px;background:#a0a0b0"></div>
<div class="t" style="left:855px;top:1180px;font-size:13px">Spoke</div><div class="t" style="left:899px;top:1180px;font-size:13px">Points: 120</div><div class="t" style="left:972px;top:1180px;font-size:13px;letter-spacing:-0.2px">Pinwheel angle: 0.…</div>
<div class="a" style="left:1099px;top:1176px;width:1px;height:20px;background:#a0a0b0"></div>
<div class="t" style="left:1103px;top:1180px;font-size:13px">No image edit data</div>
<div class="a" style="left:0;top:1196px;width:1200px;height:4px;background:#000"></div>
</body></html>
